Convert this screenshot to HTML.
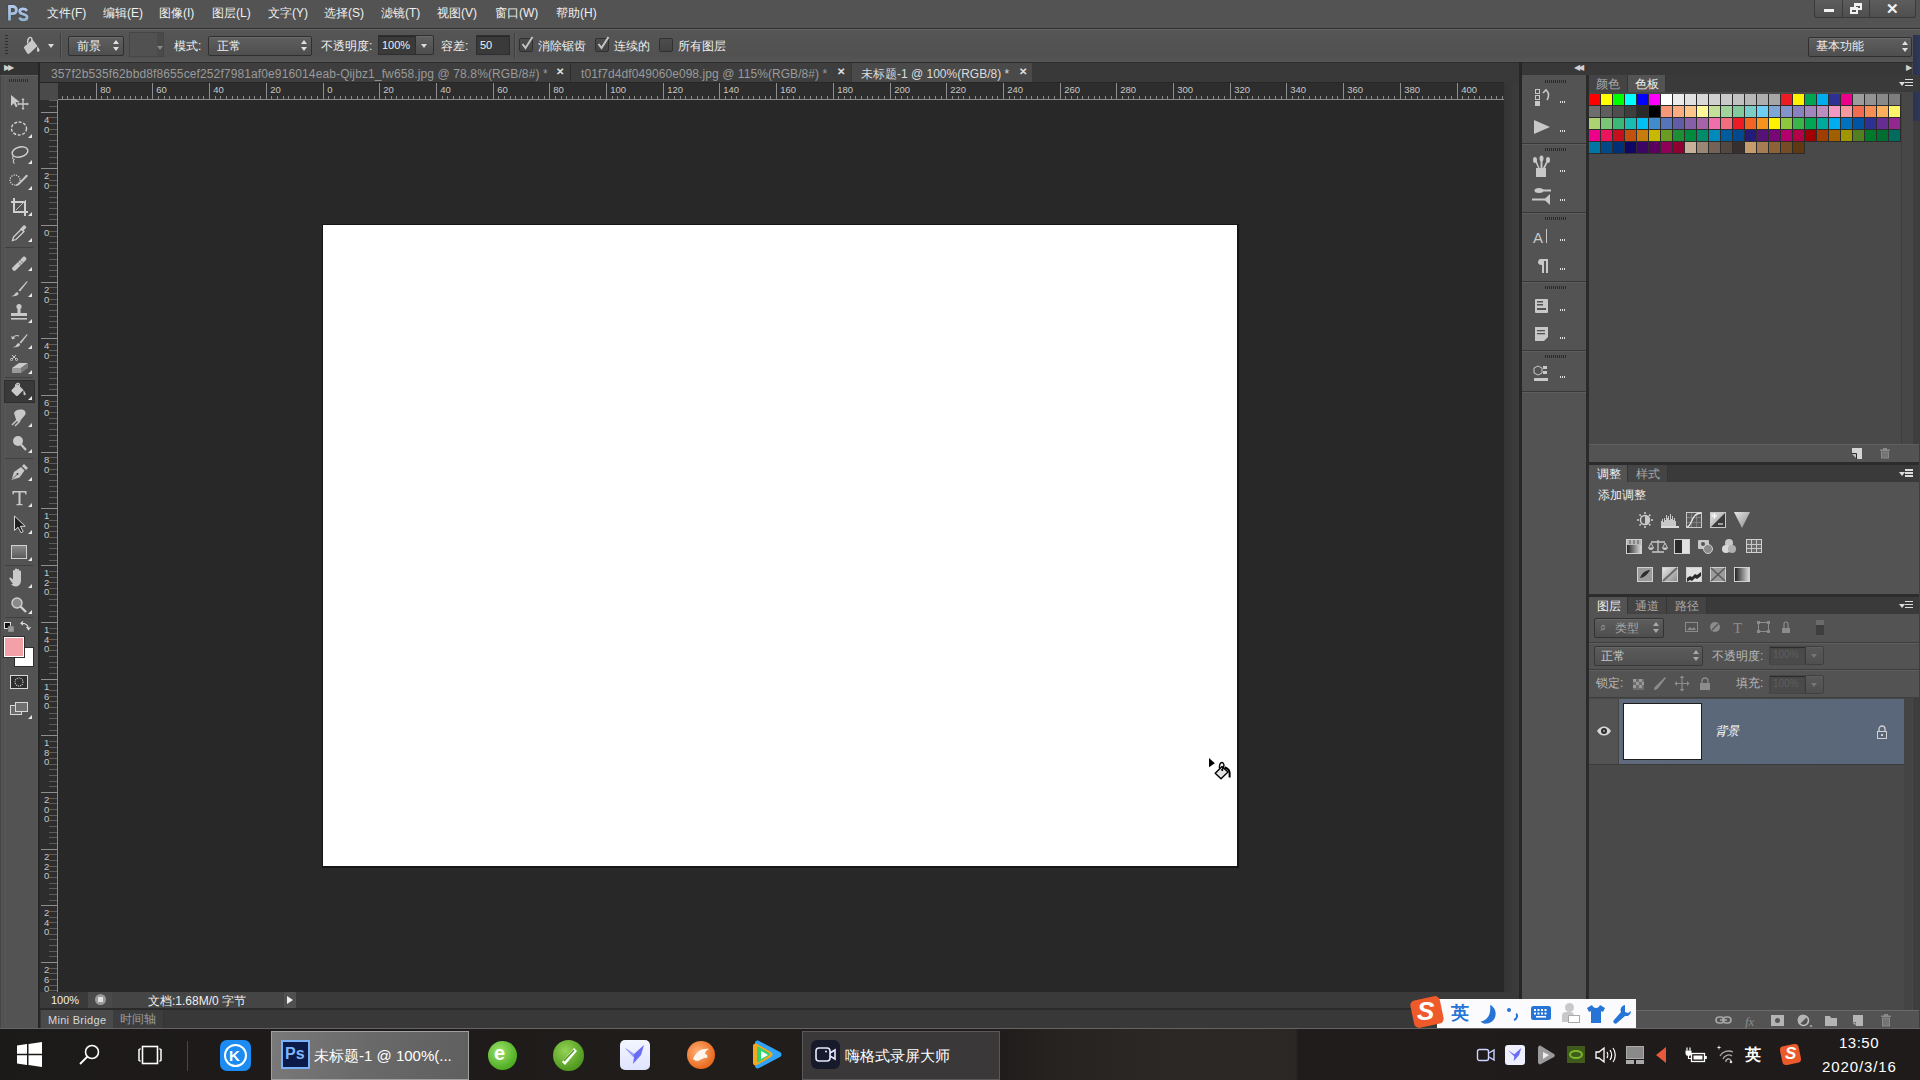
<!DOCTYPE html>
<html><head><meta charset="utf-8">
<style>
*{margin:0;padding:0;box-sizing:border-box}
html,body{width:1920px;height:1080px;overflow:hidden;background:#282828;font-family:"Liberation Sans",sans-serif;font-size:12px;color:#e6e6e6}
.a{position:absolute}
.t{position:absolute;white-space:nowrap;line-height:1}
.sel{position:absolute;background:linear-gradient(#5f5f5f,#4e4e4e);border:1px solid #2f2f2f;border-radius:2px;box-shadow:inset 0 1px 0 #6a6a6a}
.inp{position:absolute;background:#3a3a3a;border:1px solid #2e2e2e;box-shadow:inset 0 1px 1px #2a2a2a}
.ud{position:absolute;width:7px;height:11px}
.ud:before{content:"";position:absolute;left:0;top:0;border-left:3.5px solid transparent;border-right:3.5px solid transparent;border-bottom:4px solid #e0e0e0}
.ud:after{content:"";position:absolute;left:0;bottom:0;border-left:3.5px solid transparent;border-right:3.5px solid transparent;border-top:4px solid #e0e0e0}
.dn{position:absolute;border-left:3.5px solid transparent;border-right:3.5px solid transparent;border-top:4px solid #dcdcdc}
.cb{position:absolute;width:14px;height:14px;background:linear-gradient(#4d4d4d,#444);border:1px solid #2f2f2f;border-radius:2px}
.sw{position:absolute;width:11px;height:11px}
.ic{position:absolute}
</style></head><body>
<!-- MENU BAR -->
<div class="a" style="left:0;top:0;width:1920px;height:29px;background:#535353;border-bottom:1px solid #303030"></div>
<svg class="ic" style="left:0;top:0" width="36" height="28" viewBox="0 0 36 28"><defs><linearGradient id="psg" x1="0" y1="0" x2="0" y2="1"><stop offset="0" stop-color="#b4c8ec"/><stop offset="1" stop-color="#94b4cc"/></linearGradient></defs><g fill="none" stroke="#3c4852" stroke-width="4.5" opacity=".55"><path d="M9.5 20.5V6.5h3.3a3.6 3.6 0 0 1 0 7.2H9.5"/><path d="M27 10.8c-1-1.3-2.4-1.9-3.9-1.9-2 0-3.4 1-3.4 2.6 0 3.4 7.4 2.1 7.4 5.4 0 1.8-1.7 2.9-3.7 2.9-1.7 0-3.3-.7-4.1-2"/></g><g fill="none" stroke="url(#psg)" stroke-width="2.8"><path d="M9.5 20.5V6.5h3.3a3.6 3.6 0 0 1 0 7.2H9.5"/><path d="M27 10.8c-1-1.3-2.4-1.9-3.9-1.9-2 0-3.4 1-3.4 2.6 0 3.4 7.4 2.1 7.4 5.4 0 1.8-1.7 2.9-3.7 2.9-1.7 0-3.3-.7-4.1-2"/></g></svg>
<div class="t" style="left:47px;top:7px;color:#f0f0f0">文件(F)</div>
<div class="t" style="left:103px;top:7px;color:#f0f0f0">编辑(E)</div>
<div class="t" style="left:159px;top:7px;color:#f0f0f0">图像(I)</div>
<div class="t" style="left:212px;top:7px;color:#f0f0f0">图层(L)</div>
<div class="t" style="left:268px;top:7px;color:#f0f0f0">文字(Y)</div>
<div class="t" style="left:324px;top:7px;color:#f0f0f0">选择(S)</div>
<div class="t" style="left:381px;top:7px;color:#f0f0f0">滤镜(T)</div>
<div class="t" style="left:437px;top:7px;color:#f0f0f0">视图(V)</div>
<div class="t" style="left:495px;top:7px;color:#f0f0f0">窗口(W)</div>
<div class="t" style="left:556px;top:7px;color:#f0f0f0">帮助(H)</div>
<!-- window buttons -->
<div class="a" style="left:1814px;top:0;width:102px;height:18px;background:linear-gradient(#5d5d5d,#4f4f4f);border:1px solid #3a3a3a;border-top:none;border-radius:0 0 3px 3px"></div>
<div class="a" style="left:1842px;top:0;width:1px;height:17px;background:#3a3a3a"></div>
<div class="a" style="left:1869px;top:0;width:1px;height:17px;background:#3a3a3a"></div>
<div class="a" style="left:1824px;top:9px;width:10px;height:3px;background:#f2f2f2"></div>
<div class="a" style="left:1854px;top:3px;width:8px;height:7px;border:2px solid #f2f2f2;border-top-width:3px"></div>
<div class="a" style="left:1850px;top:7px;width:8px;height:7px;border:2px solid #f2f2f2;border-top-width:3px;background:#565656"></div>
<div class="t" style="left:1886px;top:1px;font-size:15px;font-weight:bold;color:#f2f2f2">✕</div>
<!-- OPTIONS BAR -->
<div class="a" style="left:0;top:29px;width:1920px;height:34px;background:linear-gradient(#555,#515151 80%,#565656);border-top:1px solid #666;border-bottom:1px solid #2c2c2c"></div>
<div class="a" style="left:5px;top:35px;width:3px;height:20px;background:repeating-linear-gradient(#2e2e2e 0 1px,transparent 1px 3px)"></div>
<svg class="ic" style="left:22px;top:34px" width="20" height="20" viewBox="0 0 20 20"><path d="M2.5 12.5L10.5 5.5l5 6.5-8 7.5c-.8.7-1.8.6-2.4-.2L2.3 14.5c-.5-.7-.5-1.4.2-2z" fill="#c8c8c8"/><path d="M5.8 9.5C5 4 8.5 1.8 9.8 4.5l.2 4" fill="none" stroke="#cfcfcf" stroke-width="1.4"/><path d="M15.5 12.5c1.2 1.4 2 2.8 2 4a1.3 1.3 0 0 1-2.6 0c0-1.2.4-2.5.6-4z" fill="#d0d0d0"/></svg>
<div class="dn" style="left:48px;top:44px"></div>
<div class="a" style="left:60px;top:33px;width:1px;height:25px;background:#3e3e3e;box-shadow:1px 0 0 #5e5e5e"></div>
<div class="sel" style="left:68px;top:36px;width:56px;height:20px"></div>
<div class="t" style="left:77px;top:40px;color:#f0f0f0">前景</div>
<div class="ud" style="left:113px;top:40px"></div>
<div class="a" style="left:129px;top:32px;width:35px;height:25px;border:1px solid #454545;background:#515151"></div>
<div class="a" style="left:157px;top:33px;width:6px;height:23px;background:#4a4a4a"></div>
<div class="dn" style="left:157px;top:46px;border-top-color:#8a8a8a"></div>
<div class="t" style="left:174px;top:40px;color:#f0f0f0">模式:</div>
<div class="sel" style="left:208px;top:36px;width:104px;height:20px"></div>
<div class="t" style="left:217px;top:40px;color:#f0f0f0">正常</div>
<div class="ud" style="left:301px;top:40px"></div>
<div class="t" style="left:321px;top:40px;color:#f0f0f0">不透明度:</div>
<div class="inp" style="left:378px;top:35px;width:38px;height:20px"></div>
<div class="t" style="left:382px;top:40px;color:#f0f0f0;font-size:11px">100%</div>
<div class="sel" style="left:415px;top:35px;width:19px;height:20px"></div>
<div class="dn" style="left:421px;top:44px"></div>
<div class="t" style="left:441px;top:40px;color:#f0f0f0">容差:</div>
<div class="inp" style="left:476px;top:35px;width:34px;height:20px"></div>
<div class="t" style="left:480px;top:40px;color:#f0f0f0;font-size:11px">50</div>
<div class="a" style="left:514px;top:33px;width:1px;height:25px;background:#3e3e3e;box-shadow:1px 0 0 #5e5e5e"></div>
<div class="cb" style="left:519px;top:38px"></div>
<svg class="ic" style="left:520px;top:35px" width="14" height="16" viewBox="0 0 14 16"><path d="M2.5 9l3 4L12.5 2" fill="none" stroke="#c4c4c4" stroke-width="2"/></svg>
<div class="t" style="left:538px;top:40px;color:#f0f0f0">消除锯齿</div>
<div class="cb" style="left:595px;top:38px"></div>
<svg class="ic" style="left:596px;top:35px" width="14" height="16" viewBox="0 0 14 16"><path d="M2.5 9l3 4L12.5 2" fill="none" stroke="#c4c4c4" stroke-width="2"/></svg>
<div class="t" style="left:614px;top:40px;color:#f0f0f0">连续的</div>
<div class="cb" style="left:659px;top:38px"></div>
<div class="t" style="left:678px;top:40px;color:#f0f0f0">所有图层</div>
<div class="sel" style="left:1808px;top:37px;width:104px;height:20px"></div>
<div class="t" style="left:1816px;top:40px;color:#f0f0f0">基本功能</div>
<div class="ud" style="left:1902px;top:41px"></div>
<div class="a" style="left:0;top:63px;width:1522px;height:20px;background:#393939"></div>
<div class="a" style="left:0;top:63px;width:38px;height:12px;background:#333"></div>
<div class="t" style="left:4px;top:64px;font-size:8px;color:#d0d0d0;letter-spacing:-2px">▶▶</div>
<div class="a" style="left:38px;top:62px;width:2px;height:966px;background:#262626"></div>
<div class="a" style="left:40px;top:63px;width:530px;height:19px;background:#3e3e3e"></div>
<div class="a" style="left:570px;top:64px;width:1px;height:17px;background:#2c2c2c"></div>
<div class="a" style="left:571px;top:63px;width:280px;height:19px;background:#3e3e3e"></div>
<div class="a" style="left:852px;top:63px;width:180px;height:19px;background:#4a4a4a"></div>
<div class="t" style="left:51px;top:68px;color:#9a9a9a;font-size:12px;letter-spacing:.12px">357f2b535f62bbd8f8655cef252f7981af0e916014eab-Qijbz1_fw658.jpg @ 78.8%(RGB/8#) *</div>
<div class="t" style="left:556px;top:67px;color:#e0e0e0;font-size:10px;font-weight:bold">✕</div>
<div class="t" style="left:581px;top:68px;color:#9a9a9a;font-size:12px;letter-spacing:.07px">t01f7d4df049060e098.jpg @ 115%(RGB/8#) *</div>
<div class="t" style="left:837px;top:67px;color:#e0e0e0;font-size:10px;font-weight:bold">✕</div>
<div class="t" style="left:861px;top:68px;color:#dcdcdc;font-size:12px">未标题-1 @ 100%(RGB/8) *</div>
<div class="t" style="left:1019px;top:67px;color:#e0e0e0;font-size:10px;font-weight:bold">✕</div>
<div class="a" style="left:40px;top:82px;width:1464px;height:1px;background:#262626"></div>
<div class="a" style="left:57px;top:83px;width:1447px;height:17px;background:#2d2d2d"></div>
<div class="a" style="left:40px;top:83px;width:17px;height:909px;background:#2d2d2d"></div>
<div class="a" style="left:40px;top:83px;width:18px;height:17px;background:#4a4a4a"></div>
<div class="a" style="left:58px;top:99px;width:1446px;height:1px;background:#8a8a8a"></div>
<div class="a" style="left:57px;top:100px;width:1px;height:892px;background:#8a8a8a"></div>
<svg class="ic" style="left:58px;top:83px" width="1446" height="17"><line x1="4.5" y1="13" x2="4.5" y2="17" stroke="#8a8a8a" stroke-width="1"/><line x1="9.5" y1="13" x2="9.5" y2="17" stroke="#8a8a8a" stroke-width="1"/><line x1="15.5" y1="13" x2="15.5" y2="17" stroke="#8a8a8a" stroke-width="1"/><line x1="21.5" y1="13" x2="21.5" y2="17" stroke="#8a8a8a" stroke-width="1"/><line x1="26.5" y1="13" x2="26.5" y2="17" stroke="#8a8a8a" stroke-width="1"/><line x1="32.5" y1="13" x2="32.5" y2="17" stroke="#8a8a8a" stroke-width="1"/><line x1="38.5" y1="0" x2="38.5" y2="17" stroke="#8e8e8e" stroke-width="1"/><text x="42.2" y="10.2" font-size="9.5" fill="#c8c8c8" font-family="Liberation Sans">80</text><line x1="43.5" y1="13" x2="43.5" y2="17" stroke="#8a8a8a" stroke-width="1"/><line x1="49.5" y1="13" x2="49.5" y2="17" stroke="#8a8a8a" stroke-width="1"/><line x1="55.5" y1="13" x2="55.5" y2="17" stroke="#8a8a8a" stroke-width="1"/><line x1="60.5" y1="13" x2="60.5" y2="17" stroke="#8a8a8a" stroke-width="1"/><line x1="66.5" y1="13" x2="66.5" y2="17" stroke="#8a8a8a" stroke-width="1"/><line x1="72.5" y1="13" x2="72.5" y2="17" stroke="#8a8a8a" stroke-width="1"/><line x1="77.5" y1="13" x2="77.5" y2="17" stroke="#8a8a8a" stroke-width="1"/><line x1="83.5" y1="13" x2="83.5" y2="17" stroke="#8a8a8a" stroke-width="1"/><line x1="89.5" y1="13" x2="89.5" y2="17" stroke="#8a8a8a" stroke-width="1"/><line x1="94.5" y1="0" x2="94.5" y2="17" stroke="#8e8e8e" stroke-width="1"/><text x="98.2" y="10.2" font-size="9.5" fill="#c8c8c8" font-family="Liberation Sans">60</text><line x1="100.5" y1="13" x2="100.5" y2="17" stroke="#8a8a8a" stroke-width="1"/><line x1="106.5" y1="13" x2="106.5" y2="17" stroke="#8a8a8a" stroke-width="1"/><line x1="111.5" y1="13" x2="111.5" y2="17" stroke="#8a8a8a" stroke-width="1"/><line x1="117.5" y1="13" x2="117.5" y2="17" stroke="#8a8a8a" stroke-width="1"/><line x1="123.5" y1="13" x2="123.5" y2="17" stroke="#8a8a8a" stroke-width="1"/><line x1="128.5" y1="13" x2="128.5" y2="17" stroke="#8a8a8a" stroke-width="1"/><line x1="134.5" y1="13" x2="134.5" y2="17" stroke="#8a8a8a" stroke-width="1"/><line x1="140.5" y1="13" x2="140.5" y2="17" stroke="#8a8a8a" stroke-width="1"/><line x1="145.5" y1="13" x2="145.5" y2="17" stroke="#8a8a8a" stroke-width="1"/><line x1="151.5" y1="0" x2="151.5" y2="17" stroke="#8e8e8e" stroke-width="1"/><text x="155.2" y="10.2" font-size="9.5" fill="#c8c8c8" font-family="Liberation Sans">40</text><line x1="157.5" y1="13" x2="157.5" y2="17" stroke="#8a8a8a" stroke-width="1"/><line x1="162.5" y1="13" x2="162.5" y2="17" stroke="#8a8a8a" stroke-width="1"/><line x1="168.5" y1="13" x2="168.5" y2="17" stroke="#8a8a8a" stroke-width="1"/><line x1="174.5" y1="13" x2="174.5" y2="17" stroke="#8a8a8a" stroke-width="1"/><line x1="179.5" y1="13" x2="179.5" y2="17" stroke="#8a8a8a" stroke-width="1"/><line x1="185.5" y1="13" x2="185.5" y2="17" stroke="#8a8a8a" stroke-width="1"/><line x1="191.5" y1="13" x2="191.5" y2="17" stroke="#8a8a8a" stroke-width="1"/><line x1="196.5" y1="13" x2="196.5" y2="17" stroke="#8a8a8a" stroke-width="1"/><line x1="202.5" y1="13" x2="202.5" y2="17" stroke="#8a8a8a" stroke-width="1"/><line x1="208.5" y1="0" x2="208.5" y2="17" stroke="#8e8e8e" stroke-width="1"/><text x="212.2" y="10.2" font-size="9.5" fill="#c8c8c8" font-family="Liberation Sans">20</text><line x1="213.5" y1="13" x2="213.5" y2="17" stroke="#8a8a8a" stroke-width="1"/><line x1="219.5" y1="13" x2="219.5" y2="17" stroke="#8a8a8a" stroke-width="1"/><line x1="225.5" y1="13" x2="225.5" y2="17" stroke="#8a8a8a" stroke-width="1"/><line x1="230.5" y1="13" x2="230.5" y2="17" stroke="#8a8a8a" stroke-width="1"/><line x1="236.5" y1="13" x2="236.5" y2="17" stroke="#8a8a8a" stroke-width="1"/><line x1="242.5" y1="13" x2="242.5" y2="17" stroke="#8a8a8a" stroke-width="1"/><line x1="247.5" y1="13" x2="247.5" y2="17" stroke="#8a8a8a" stroke-width="1"/><line x1="253.5" y1="13" x2="253.5" y2="17" stroke="#8a8a8a" stroke-width="1"/><line x1="259.5" y1="13" x2="259.5" y2="17" stroke="#8a8a8a" stroke-width="1"/><line x1="265.5" y1="0" x2="265.5" y2="17" stroke="#8e8e8e" stroke-width="1"/><text x="269.2" y="10.2" font-size="9.5" fill="#c8c8c8" font-family="Liberation Sans">0</text><line x1="270.5" y1="13" x2="270.5" y2="17" stroke="#8a8a8a" stroke-width="1"/><line x1="276.5" y1="13" x2="276.5" y2="17" stroke="#8a8a8a" stroke-width="1"/><line x1="282.5" y1="13" x2="282.5" y2="17" stroke="#8a8a8a" stroke-width="1"/><line x1="287.5" y1="13" x2="287.5" y2="17" stroke="#8a8a8a" stroke-width="1"/><line x1="293.5" y1="13" x2="293.5" y2="17" stroke="#8a8a8a" stroke-width="1"/><line x1="299.5" y1="13" x2="299.5" y2="17" stroke="#8a8a8a" stroke-width="1"/><line x1="304.5" y1="13" x2="304.5" y2="17" stroke="#8a8a8a" stroke-width="1"/><line x1="310.5" y1="13" x2="310.5" y2="17" stroke="#8a8a8a" stroke-width="1"/><line x1="316.5" y1="13" x2="316.5" y2="17" stroke="#8a8a8a" stroke-width="1"/><line x1="321.5" y1="0" x2="321.5" y2="17" stroke="#8e8e8e" stroke-width="1"/><text x="325.2" y="10.2" font-size="9.5" fill="#c8c8c8" font-family="Liberation Sans">20</text><line x1="327.5" y1="13" x2="327.5" y2="17" stroke="#8a8a8a" stroke-width="1"/><line x1="333.5" y1="13" x2="333.5" y2="17" stroke="#8a8a8a" stroke-width="1"/><line x1="338.5" y1="13" x2="338.5" y2="17" stroke="#8a8a8a" stroke-width="1"/><line x1="344.5" y1="13" x2="344.5" y2="17" stroke="#8a8a8a" stroke-width="1"/><line x1="350.5" y1="13" x2="350.5" y2="17" stroke="#8a8a8a" stroke-width="1"/><line x1="355.5" y1="13" x2="355.5" y2="17" stroke="#8a8a8a" stroke-width="1"/><line x1="361.5" y1="13" x2="361.5" y2="17" stroke="#8a8a8a" stroke-width="1"/><line x1="367.5" y1="13" x2="367.5" y2="17" stroke="#8a8a8a" stroke-width="1"/><line x1="372.5" y1="13" x2="372.5" y2="17" stroke="#8a8a8a" stroke-width="1"/><line x1="378.5" y1="0" x2="378.5" y2="17" stroke="#8e8e8e" stroke-width="1"/><text x="382.2" y="10.2" font-size="9.5" fill="#c8c8c8" font-family="Liberation Sans">40</text><line x1="384.5" y1="13" x2="384.5" y2="17" stroke="#8a8a8a" stroke-width="1"/><line x1="389.5" y1="13" x2="389.5" y2="17" stroke="#8a8a8a" stroke-width="1"/><line x1="395.5" y1="13" x2="395.5" y2="17" stroke="#8a8a8a" stroke-width="1"/><line x1="401.5" y1="13" x2="401.5" y2="17" stroke="#8a8a8a" stroke-width="1"/><line x1="406.5" y1="13" x2="406.5" y2="17" stroke="#8a8a8a" stroke-width="1"/><line x1="412.5" y1="13" x2="412.5" y2="17" stroke="#8a8a8a" stroke-width="1"/><line x1="418.5" y1="13" x2="418.5" y2="17" stroke="#8a8a8a" stroke-width="1"/><line x1="423.5" y1="13" x2="423.5" y2="17" stroke="#8a8a8a" stroke-width="1"/><line x1="429.5" y1="13" x2="429.5" y2="17" stroke="#8a8a8a" stroke-width="1"/><line x1="435.5" y1="0" x2="435.5" y2="17" stroke="#8e8e8e" stroke-width="1"/><text x="439.2" y="10.2" font-size="9.5" fill="#c8c8c8" font-family="Liberation Sans">60</text><line x1="440.5" y1="13" x2="440.5" y2="17" stroke="#8a8a8a" stroke-width="1"/><line x1="446.5" y1="13" x2="446.5" y2="17" stroke="#8a8a8a" stroke-width="1"/><line x1="452.5" y1="13" x2="452.5" y2="17" stroke="#8a8a8a" stroke-width="1"/><line x1="457.5" y1="13" x2="457.5" y2="17" stroke="#8a8a8a" stroke-width="1"/><line x1="463.5" y1="13" x2="463.5" y2="17" stroke="#8a8a8a" stroke-width="1"/><line x1="469.5" y1="13" x2="469.5" y2="17" stroke="#8a8a8a" stroke-width="1"/><line x1="474.5" y1="13" x2="474.5" y2="17" stroke="#8a8a8a" stroke-width="1"/><line x1="480.5" y1="13" x2="480.5" y2="17" stroke="#8a8a8a" stroke-width="1"/><line x1="486.5" y1="13" x2="486.5" y2="17" stroke="#8a8a8a" stroke-width="1"/><line x1="491.5" y1="0" x2="491.5" y2="17" stroke="#8e8e8e" stroke-width="1"/><text x="495.2" y="10.2" font-size="9.5" fill="#c8c8c8" font-family="Liberation Sans">80</text><line x1="497.5" y1="13" x2="497.5" y2="17" stroke="#8a8a8a" stroke-width="1"/><line x1="503.5" y1="13" x2="503.5" y2="17" stroke="#8a8a8a" stroke-width="1"/><line x1="508.5" y1="13" x2="508.5" y2="17" stroke="#8a8a8a" stroke-width="1"/><line x1="514.5" y1="13" x2="514.5" y2="17" stroke="#8a8a8a" stroke-width="1"/><line x1="520.5" y1="13" x2="520.5" y2="17" stroke="#8a8a8a" stroke-width="1"/><line x1="525.5" y1="13" x2="525.5" y2="17" stroke="#8a8a8a" stroke-width="1"/><line x1="531.5" y1="13" x2="531.5" y2="17" stroke="#8a8a8a" stroke-width="1"/><line x1="537.5" y1="13" x2="537.5" y2="17" stroke="#8a8a8a" stroke-width="1"/><line x1="542.5" y1="13" x2="542.5" y2="17" stroke="#8a8a8a" stroke-width="1"/><line x1="548.5" y1="0" x2="548.5" y2="17" stroke="#8e8e8e" stroke-width="1"/><text x="552.2" y="10.2" font-size="9.5" fill="#c8c8c8" font-family="Liberation Sans">100</text><line x1="554.5" y1="13" x2="554.5" y2="17" stroke="#8a8a8a" stroke-width="1"/><line x1="559.5" y1="13" x2="559.5" y2="17" stroke="#8a8a8a" stroke-width="1"/><line x1="565.5" y1="13" x2="565.5" y2="17" stroke="#8a8a8a" stroke-width="1"/><line x1="571.5" y1="13" x2="571.5" y2="17" stroke="#8a8a8a" stroke-width="1"/><line x1="576.5" y1="13" x2="576.5" y2="17" stroke="#8a8a8a" stroke-width="1"/><line x1="582.5" y1="13" x2="582.5" y2="17" stroke="#8a8a8a" stroke-width="1"/><line x1="588.5" y1="13" x2="588.5" y2="17" stroke="#8a8a8a" stroke-width="1"/><line x1="593.5" y1="13" x2="593.5" y2="17" stroke="#8a8a8a" stroke-width="1"/><line x1="599.5" y1="13" x2="599.5" y2="17" stroke="#8a8a8a" stroke-width="1"/><line x1="605.5" y1="0" x2="605.5" y2="17" stroke="#8e8e8e" stroke-width="1"/><text x="609.2" y="10.2" font-size="9.5" fill="#c8c8c8" font-family="Liberation Sans">120</text><line x1="610.5" y1="13" x2="610.5" y2="17" stroke="#8a8a8a" stroke-width="1"/><line x1="616.5" y1="13" x2="616.5" y2="17" stroke="#8a8a8a" stroke-width="1"/><line x1="622.5" y1="13" x2="622.5" y2="17" stroke="#8a8a8a" stroke-width="1"/><line x1="627.5" y1="13" x2="627.5" y2="17" stroke="#8a8a8a" stroke-width="1"/><line x1="633.5" y1="13" x2="633.5" y2="17" stroke="#8a8a8a" stroke-width="1"/><line x1="639.5" y1="13" x2="639.5" y2="17" stroke="#8a8a8a" stroke-width="1"/><line x1="644.5" y1="13" x2="644.5" y2="17" stroke="#8a8a8a" stroke-width="1"/><line x1="650.5" y1="13" x2="650.5" y2="17" stroke="#8a8a8a" stroke-width="1"/><line x1="656.5" y1="13" x2="656.5" y2="17" stroke="#8a8a8a" stroke-width="1"/><line x1="661.5" y1="0" x2="661.5" y2="17" stroke="#8e8e8e" stroke-width="1"/><text x="665.2" y="10.2" font-size="9.5" fill="#c8c8c8" font-family="Liberation Sans">140</text><line x1="667.5" y1="13" x2="667.5" y2="17" stroke="#8a8a8a" stroke-width="1"/><line x1="673.5" y1="13" x2="673.5" y2="17" stroke="#8a8a8a" stroke-width="1"/><line x1="678.5" y1="13" x2="678.5" y2="17" stroke="#8a8a8a" stroke-width="1"/><line x1="684.5" y1="13" x2="684.5" y2="17" stroke="#8a8a8a" stroke-width="1"/><line x1="690.5" y1="13" x2="690.5" y2="17" stroke="#8a8a8a" stroke-width="1"/><line x1="695.5" y1="13" x2="695.5" y2="17" stroke="#8a8a8a" stroke-width="1"/><line x1="701.5" y1="13" x2="701.5" y2="17" stroke="#8a8a8a" stroke-width="1"/><line x1="707.5" y1="13" x2="707.5" y2="17" stroke="#8a8a8a" stroke-width="1"/><line x1="712.5" y1="13" x2="712.5" y2="17" stroke="#8a8a8a" stroke-width="1"/><line x1="718.5" y1="0" x2="718.5" y2="17" stroke="#8e8e8e" stroke-width="1"/><text x="722.2" y="10.2" font-size="9.5" fill="#c8c8c8" font-family="Liberation Sans">160</text><line x1="724.5" y1="13" x2="724.5" y2="17" stroke="#8a8a8a" stroke-width="1"/><line x1="729.5" y1="13" x2="729.5" y2="17" stroke="#8a8a8a" stroke-width="1"/><line x1="735.5" y1="13" x2="735.5" y2="17" stroke="#8a8a8a" stroke-width="1"/><line x1="741.5" y1="13" x2="741.5" y2="17" stroke="#8a8a8a" stroke-width="1"/><line x1="746.5" y1="13" x2="746.5" y2="17" stroke="#8a8a8a" stroke-width="1"/><line x1="752.5" y1="13" x2="752.5" y2="17" stroke="#8a8a8a" stroke-width="1"/><line x1="758.5" y1="13" x2="758.5" y2="17" stroke="#8a8a8a" stroke-width="1"/><line x1="763.5" y1="13" x2="763.5" y2="17" stroke="#8a8a8a" stroke-width="1"/><line x1="769.5" y1="13" x2="769.5" y2="17" stroke="#8a8a8a" stroke-width="1"/><line x1="775.5" y1="0" x2="775.5" y2="17" stroke="#8e8e8e" stroke-width="1"/><text x="779.2" y="10.2" font-size="9.5" fill="#c8c8c8" font-family="Liberation Sans">180</text><line x1="780.5" y1="13" x2="780.5" y2="17" stroke="#8a8a8a" stroke-width="1"/><line x1="786.5" y1="13" x2="786.5" y2="17" stroke="#8a8a8a" stroke-width="1"/><line x1="792.5" y1="13" x2="792.5" y2="17" stroke="#8a8a8a" stroke-width="1"/><line x1="797.5" y1="13" x2="797.5" y2="17" stroke="#8a8a8a" stroke-width="1"/><line x1="803.5" y1="13" x2="803.5" y2="17" stroke="#8a8a8a" stroke-width="1"/><line x1="809.5" y1="13" x2="809.5" y2="17" stroke="#8a8a8a" stroke-width="1"/><line x1="814.5" y1="13" x2="814.5" y2="17" stroke="#8a8a8a" stroke-width="1"/><line x1="820.5" y1="13" x2="820.5" y2="17" stroke="#8a8a8a" stroke-width="1"/><line x1="826.5" y1="13" x2="826.5" y2="17" stroke="#8a8a8a" stroke-width="1"/><line x1="832.5" y1="0" x2="832.5" y2="17" stroke="#8e8e8e" stroke-width="1"/><text x="836.2" y="10.2" font-size="9.5" fill="#c8c8c8" font-family="Liberation Sans">200</text><line x1="837.5" y1="13" x2="837.5" y2="17" stroke="#8a8a8a" stroke-width="1"/><line x1="843.5" y1="13" x2="843.5" y2="17" stroke="#8a8a8a" stroke-width="1"/><line x1="849.5" y1="13" x2="849.5" y2="17" stroke="#8a8a8a" stroke-width="1"/><line x1="854.5" y1="13" x2="854.5" y2="17" stroke="#8a8a8a" stroke-width="1"/><line x1="860.5" y1="13" x2="860.5" y2="17" stroke="#8a8a8a" stroke-width="1"/><line x1="866.5" y1="13" x2="866.5" y2="17" stroke="#8a8a8a" stroke-width="1"/><line x1="871.5" y1="13" x2="871.5" y2="17" stroke="#8a8a8a" stroke-width="1"/><line x1="877.5" y1="13" x2="877.5" y2="17" stroke="#8a8a8a" stroke-width="1"/><line x1="883.5" y1="13" x2="883.5" y2="17" stroke="#8a8a8a" stroke-width="1"/><line x1="888.5" y1="0" x2="888.5" y2="17" stroke="#8e8e8e" stroke-width="1"/><text x="892.2" y="10.2" font-size="9.5" fill="#c8c8c8" font-family="Liberation Sans">220</text><line x1="894.5" y1="13" x2="894.5" y2="17" stroke="#8a8a8a" stroke-width="1"/><line x1="900.5" y1="13" x2="900.5" y2="17" stroke="#8a8a8a" stroke-width="1"/><line x1="905.5" y1="13" x2="905.5" y2="17" stroke="#8a8a8a" stroke-width="1"/><line x1="911.5" y1="13" x2="911.5" y2="17" stroke="#8a8a8a" stroke-width="1"/><line x1="917.5" y1="13" x2="917.5" y2="17" stroke="#8a8a8a" stroke-width="1"/><line x1="922.5" y1="13" x2="922.5" y2="17" stroke="#8a8a8a" stroke-width="1"/><line x1="928.5" y1="13" x2="928.5" y2="17" stroke="#8a8a8a" stroke-width="1"/><line x1="934.5" y1="13" x2="934.5" y2="17" stroke="#8a8a8a" stroke-width="1"/><line x1="939.5" y1="13" x2="939.5" y2="17" stroke="#8a8a8a" stroke-width="1"/><line x1="945.5" y1="0" x2="945.5" y2="17" stroke="#8e8e8e" stroke-width="1"/><text x="949.2" y="10.2" font-size="9.5" fill="#c8c8c8" font-family="Liberation Sans">240</text><line x1="951.5" y1="13" x2="951.5" y2="17" stroke="#8a8a8a" stroke-width="1"/><line x1="956.5" y1="13" x2="956.5" y2="17" stroke="#8a8a8a" stroke-width="1"/><line x1="962.5" y1="13" x2="962.5" y2="17" stroke="#8a8a8a" stroke-width="1"/><line x1="968.5" y1="13" x2="968.5" y2="17" stroke="#8a8a8a" stroke-width="1"/><line x1="973.5" y1="13" x2="973.5" y2="17" stroke="#8a8a8a" stroke-width="1"/><line x1="979.5" y1="13" x2="979.5" y2="17" stroke="#8a8a8a" stroke-width="1"/><line x1="985.5" y1="13" x2="985.5" y2="17" stroke="#8a8a8a" stroke-width="1"/><line x1="990.5" y1="13" x2="990.5" y2="17" stroke="#8a8a8a" stroke-width="1"/><line x1="996.5" y1="13" x2="996.5" y2="17" stroke="#8a8a8a" stroke-width="1"/><line x1="1002.5" y1="0" x2="1002.5" y2="17" stroke="#8e8e8e" stroke-width="1"/><text x="1006.2" y="10.2" font-size="9.5" fill="#c8c8c8" font-family="Liberation Sans">260</text><line x1="1007.5" y1="13" x2="1007.5" y2="17" stroke="#8a8a8a" stroke-width="1"/><line x1="1013.5" y1="13" x2="1013.5" y2="17" stroke="#8a8a8a" stroke-width="1"/><line x1="1019.5" y1="13" x2="1019.5" y2="17" stroke="#8a8a8a" stroke-width="1"/><line x1="1024.5" y1="13" x2="1024.5" y2="17" stroke="#8a8a8a" stroke-width="1"/><line x1="1030.5" y1="13" x2="1030.5" y2="17" stroke="#8a8a8a" stroke-width="1"/><line x1="1036.5" y1="13" x2="1036.5" y2="17" stroke="#8a8a8a" stroke-width="1"/><line x1="1041.5" y1="13" x2="1041.5" y2="17" stroke="#8a8a8a" stroke-width="1"/><line x1="1047.5" y1="13" x2="1047.5" y2="17" stroke="#8a8a8a" stroke-width="1"/><line x1="1053.5" y1="13" x2="1053.5" y2="17" stroke="#8a8a8a" stroke-width="1"/><line x1="1058.5" y1="0" x2="1058.5" y2="17" stroke="#8e8e8e" stroke-width="1"/><text x="1062.2" y="10.2" font-size="9.5" fill="#c8c8c8" font-family="Liberation Sans">280</text><line x1="1064.5" y1="13" x2="1064.5" y2="17" stroke="#8a8a8a" stroke-width="1"/><line x1="1070.5" y1="13" x2="1070.5" y2="17" stroke="#8a8a8a" stroke-width="1"/><line x1="1075.5" y1="13" x2="1075.5" y2="17" stroke="#8a8a8a" stroke-width="1"/><line x1="1081.5" y1="13" x2="1081.5" y2="17" stroke="#8a8a8a" stroke-width="1"/><line x1="1087.5" y1="13" x2="1087.5" y2="17" stroke="#8a8a8a" stroke-width="1"/><line x1="1092.5" y1="13" x2="1092.5" y2="17" stroke="#8a8a8a" stroke-width="1"/><line x1="1098.5" y1="13" x2="1098.5" y2="17" stroke="#8a8a8a" stroke-width="1"/><line x1="1104.5" y1="13" x2="1104.5" y2="17" stroke="#8a8a8a" stroke-width="1"/><line x1="1109.5" y1="13" x2="1109.5" y2="17" stroke="#8a8a8a" stroke-width="1"/><line x1="1115.5" y1="0" x2="1115.5" y2="17" stroke="#8e8e8e" stroke-width="1"/><text x="1119.2" y="10.2" font-size="9.5" fill="#c8c8c8" font-family="Liberation Sans">300</text><line x1="1121.5" y1="13" x2="1121.5" y2="17" stroke="#8a8a8a" stroke-width="1"/><line x1="1126.5" y1="13" x2="1126.5" y2="17" stroke="#8a8a8a" stroke-width="1"/><line x1="1132.5" y1="13" x2="1132.5" y2="17" stroke="#8a8a8a" stroke-width="1"/><line x1="1138.5" y1="13" x2="1138.5" y2="17" stroke="#8a8a8a" stroke-width="1"/><line x1="1143.5" y1="13" x2="1143.5" y2="17" stroke="#8a8a8a" stroke-width="1"/><line x1="1149.5" y1="13" x2="1149.5" y2="17" stroke="#8a8a8a" stroke-width="1"/><line x1="1155.5" y1="13" x2="1155.5" y2="17" stroke="#8a8a8a" stroke-width="1"/><line x1="1160.5" y1="13" x2="1160.5" y2="17" stroke="#8a8a8a" stroke-width="1"/><line x1="1166.5" y1="13" x2="1166.5" y2="17" stroke="#8a8a8a" stroke-width="1"/><line x1="1172.5" y1="0" x2="1172.5" y2="17" stroke="#8e8e8e" stroke-width="1"/><text x="1176.2" y="10.2" font-size="9.5" fill="#c8c8c8" font-family="Liberation Sans">320</text><line x1="1177.5" y1="13" x2="1177.5" y2="17" stroke="#8a8a8a" stroke-width="1"/><line x1="1183.5" y1="13" x2="1183.5" y2="17" stroke="#8a8a8a" stroke-width="1"/><line x1="1189.5" y1="13" x2="1189.5" y2="17" stroke="#8a8a8a" stroke-width="1"/><line x1="1194.5" y1="13" x2="1194.5" y2="17" stroke="#8a8a8a" stroke-width="1"/><line x1="1200.5" y1="13" x2="1200.5" y2="17" stroke="#8a8a8a" stroke-width="1"/><line x1="1206.5" y1="13" x2="1206.5" y2="17" stroke="#8a8a8a" stroke-width="1"/><line x1="1211.5" y1="13" x2="1211.5" y2="17" stroke="#8a8a8a" stroke-width="1"/><line x1="1217.5" y1="13" x2="1217.5" y2="17" stroke="#8a8a8a" stroke-width="1"/><line x1="1223.5" y1="13" x2="1223.5" y2="17" stroke="#8a8a8a" stroke-width="1"/><line x1="1228.5" y1="0" x2="1228.5" y2="17" stroke="#8e8e8e" stroke-width="1"/><text x="1232.2" y="10.2" font-size="9.5" fill="#c8c8c8" font-family="Liberation Sans">340</text><line x1="1234.5" y1="13" x2="1234.5" y2="17" stroke="#8a8a8a" stroke-width="1"/><line x1="1240.5" y1="13" x2="1240.5" y2="17" stroke="#8a8a8a" stroke-width="1"/><line x1="1245.5" y1="13" x2="1245.5" y2="17" stroke="#8a8a8a" stroke-width="1"/><line x1="1251.5" y1="13" x2="1251.5" y2="17" stroke="#8a8a8a" stroke-width="1"/><line x1="1257.5" y1="13" x2="1257.5" y2="17" stroke="#8a8a8a" stroke-width="1"/><line x1="1262.5" y1="13" x2="1262.5" y2="17" stroke="#8a8a8a" stroke-width="1"/><line x1="1268.5" y1="13" x2="1268.5" y2="17" stroke="#8a8a8a" stroke-width="1"/><line x1="1274.5" y1="13" x2="1274.5" y2="17" stroke="#8a8a8a" stroke-width="1"/><line x1="1279.5" y1="13" x2="1279.5" y2="17" stroke="#8a8a8a" stroke-width="1"/><line x1="1285.5" y1="0" x2="1285.5" y2="17" stroke="#8e8e8e" stroke-width="1"/><text x="1289.2" y="10.2" font-size="9.5" fill="#c8c8c8" font-family="Liberation Sans">360</text><line x1="1291.5" y1="13" x2="1291.5" y2="17" stroke="#8a8a8a" stroke-width="1"/><line x1="1296.5" y1="13" x2="1296.5" y2="17" stroke="#8a8a8a" stroke-width="1"/><line x1="1302.5" y1="13" x2="1302.5" y2="17" stroke="#8a8a8a" stroke-width="1"/><line x1="1308.5" y1="13" x2="1308.5" y2="17" stroke="#8a8a8a" stroke-width="1"/><line x1="1313.5" y1="13" x2="1313.5" y2="17" stroke="#8a8a8a" stroke-width="1"/><line x1="1319.5" y1="13" x2="1319.5" y2="17" stroke="#8a8a8a" stroke-width="1"/><line x1="1325.5" y1="13" x2="1325.5" y2="17" stroke="#8a8a8a" stroke-width="1"/><line x1="1330.5" y1="13" x2="1330.5" y2="17" stroke="#8a8a8a" stroke-width="1"/><line x1="1336.5" y1="13" x2="1336.5" y2="17" stroke="#8a8a8a" stroke-width="1"/><line x1="1342.5" y1="0" x2="1342.5" y2="17" stroke="#8e8e8e" stroke-width="1"/><text x="1346.2" y="10.2" font-size="9.5" fill="#c8c8c8" font-family="Liberation Sans">380</text><line x1="1347.5" y1="13" x2="1347.5" y2="17" stroke="#8a8a8a" stroke-width="1"/><line x1="1353.5" y1="13" x2="1353.5" y2="17" stroke="#8a8a8a" stroke-width="1"/><line x1="1359.5" y1="13" x2="1359.5" y2="17" stroke="#8a8a8a" stroke-width="1"/><line x1="1364.5" y1="13" x2="1364.5" y2="17" stroke="#8a8a8a" stroke-width="1"/><line x1="1370.5" y1="13" x2="1370.5" y2="17" stroke="#8a8a8a" stroke-width="1"/><line x1="1376.5" y1="13" x2="1376.5" y2="17" stroke="#8a8a8a" stroke-width="1"/><line x1="1381.5" y1="13" x2="1381.5" y2="17" stroke="#8a8a8a" stroke-width="1"/><line x1="1387.5" y1="13" x2="1387.5" y2="17" stroke="#8a8a8a" stroke-width="1"/><line x1="1393.5" y1="13" x2="1393.5" y2="17" stroke="#8a8a8a" stroke-width="1"/><line x1="1399.5" y1="0" x2="1399.5" y2="17" stroke="#8e8e8e" stroke-width="1"/><text x="1403.2" y="10.2" font-size="9.5" fill="#c8c8c8" font-family="Liberation Sans">400</text><line x1="1404.5" y1="13" x2="1404.5" y2="17" stroke="#8a8a8a" stroke-width="1"/><line x1="1410.5" y1="13" x2="1410.5" y2="17" stroke="#8a8a8a" stroke-width="1"/><line x1="1416.5" y1="13" x2="1416.5" y2="17" stroke="#8a8a8a" stroke-width="1"/><line x1="1421.5" y1="13" x2="1421.5" y2="17" stroke="#8a8a8a" stroke-width="1"/><line x1="1427.5" y1="13" x2="1427.5" y2="17" stroke="#8a8a8a" stroke-width="1"/><line x1="1433.5" y1="13" x2="1433.5" y2="17" stroke="#8a8a8a" stroke-width="1"/><line x1="1438.5" y1="13" x2="1438.5" y2="17" stroke="#8a8a8a" stroke-width="1"/><line x1="1444.5" y1="13" x2="1444.5" y2="17" stroke="#8a8a8a" stroke-width="1"/></svg>
<svg class="ic" style="left:40px;top:100px" width="17" height="892"><line x1="9" y1="0.5" x2="17" y2="0.5" stroke="#5c5c5c" stroke-width="1"/><line x1="9" y1="6.5" x2="17" y2="6.5" stroke="#5c5c5c" stroke-width="1"/><line x1="1" y1="12.5" x2="17" y2="12.5" stroke="#8e8e8e" stroke-width="1"/><text x="4" y="23.0" font-size="9.5" fill="#c8c8c8" font-family="Liberation Sans">4</text><text x="4" y="32.7" font-size="9.5" fill="#c8c8c8" font-family="Liberation Sans">0</text><line x1="9" y1="17.5" x2="17" y2="17.5" stroke="#5c5c5c" stroke-width="1"/><line x1="9" y1="23.5" x2="17" y2="23.5" stroke="#5c5c5c" stroke-width="1"/><line x1="9" y1="29.5" x2="17" y2="29.5" stroke="#5c5c5c" stroke-width="1"/><line x1="9" y1="34.5" x2="17" y2="34.5" stroke="#5c5c5c" stroke-width="1"/><line x1="9" y1="40.5" x2="17" y2="40.5" stroke="#5c5c5c" stroke-width="1"/><line x1="9" y1="46.5" x2="17" y2="46.5" stroke="#5c5c5c" stroke-width="1"/><line x1="9" y1="51.5" x2="17" y2="51.5" stroke="#5c5c5c" stroke-width="1"/><line x1="9" y1="57.5" x2="17" y2="57.5" stroke="#5c5c5c" stroke-width="1"/><line x1="9" y1="63.5" x2="17" y2="63.5" stroke="#5c5c5c" stroke-width="1"/><line x1="1" y1="68.5" x2="17" y2="68.5" stroke="#8e8e8e" stroke-width="1"/><text x="4" y="79.0" font-size="9.5" fill="#c8c8c8" font-family="Liberation Sans">2</text><text x="4" y="88.7" font-size="9.5" fill="#c8c8c8" font-family="Liberation Sans">0</text><line x1="9" y1="74.5" x2="17" y2="74.5" stroke="#5c5c5c" stroke-width="1"/><line x1="9" y1="80.5" x2="17" y2="80.5" stroke="#5c5c5c" stroke-width="1"/><line x1="9" y1="85.5" x2="17" y2="85.5" stroke="#5c5c5c" stroke-width="1"/><line x1="9" y1="91.5" x2="17" y2="91.5" stroke="#5c5c5c" stroke-width="1"/><line x1="9" y1="97.5" x2="17" y2="97.5" stroke="#5c5c5c" stroke-width="1"/><line x1="9" y1="102.5" x2="17" y2="102.5" stroke="#5c5c5c" stroke-width="1"/><line x1="9" y1="108.5" x2="17" y2="108.5" stroke="#5c5c5c" stroke-width="1"/><line x1="9" y1="114.5" x2="17" y2="114.5" stroke="#5c5c5c" stroke-width="1"/><line x1="9" y1="119.5" x2="17" y2="119.5" stroke="#5c5c5c" stroke-width="1"/><line x1="1" y1="125.5" x2="17" y2="125.5" stroke="#8e8e8e" stroke-width="1"/><text x="4" y="136.0" font-size="9.5" fill="#c8c8c8" font-family="Liberation Sans">0</text><line x1="9" y1="131.5" x2="17" y2="131.5" stroke="#5c5c5c" stroke-width="1"/><line x1="9" y1="136.5" x2="17" y2="136.5" stroke="#5c5c5c" stroke-width="1"/><line x1="9" y1="142.5" x2="17" y2="142.5" stroke="#5c5c5c" stroke-width="1"/><line x1="9" y1="148.5" x2="17" y2="148.5" stroke="#5c5c5c" stroke-width="1"/><line x1="9" y1="153.5" x2="17" y2="153.5" stroke="#5c5c5c" stroke-width="1"/><line x1="9" y1="159.5" x2="17" y2="159.5" stroke="#5c5c5c" stroke-width="1"/><line x1="9" y1="165.5" x2="17" y2="165.5" stroke="#5c5c5c" stroke-width="1"/><line x1="9" y1="170.5" x2="17" y2="170.5" stroke="#5c5c5c" stroke-width="1"/><line x1="9" y1="176.5" x2="17" y2="176.5" stroke="#5c5c5c" stroke-width="1"/><line x1="1" y1="182.5" x2="17" y2="182.5" stroke="#8e8e8e" stroke-width="1"/><text x="4" y="193.0" font-size="9.5" fill="#c8c8c8" font-family="Liberation Sans">2</text><text x="4" y="202.7" font-size="9.5" fill="#c8c8c8" font-family="Liberation Sans">0</text><line x1="9" y1="187.5" x2="17" y2="187.5" stroke="#5c5c5c" stroke-width="1"/><line x1="9" y1="193.5" x2="17" y2="193.5" stroke="#5c5c5c" stroke-width="1"/><line x1="9" y1="199.5" x2="17" y2="199.5" stroke="#5c5c5c" stroke-width="1"/><line x1="9" y1="204.5" x2="17" y2="204.5" stroke="#5c5c5c" stroke-width="1"/><line x1="9" y1="210.5" x2="17" y2="210.5" stroke="#5c5c5c" stroke-width="1"/><line x1="9" y1="216.5" x2="17" y2="216.5" stroke="#5c5c5c" stroke-width="1"/><line x1="9" y1="221.5" x2="17" y2="221.5" stroke="#5c5c5c" stroke-width="1"/><line x1="9" y1="227.5" x2="17" y2="227.5" stroke="#5c5c5c" stroke-width="1"/><line x1="9" y1="233.5" x2="17" y2="233.5" stroke="#5c5c5c" stroke-width="1"/><line x1="1" y1="238.5" x2="17" y2="238.5" stroke="#8e8e8e" stroke-width="1"/><text x="4" y="249.0" font-size="9.5" fill="#c8c8c8" font-family="Liberation Sans">4</text><text x="4" y="258.7" font-size="9.5" fill="#c8c8c8" font-family="Liberation Sans">0</text><line x1="9" y1="244.5" x2="17" y2="244.5" stroke="#5c5c5c" stroke-width="1"/><line x1="9" y1="250.5" x2="17" y2="250.5" stroke="#5c5c5c" stroke-width="1"/><line x1="9" y1="255.5" x2="17" y2="255.5" stroke="#5c5c5c" stroke-width="1"/><line x1="9" y1="261.5" x2="17" y2="261.5" stroke="#5c5c5c" stroke-width="1"/><line x1="9" y1="267.5" x2="17" y2="267.5" stroke="#5c5c5c" stroke-width="1"/><line x1="9" y1="272.5" x2="17" y2="272.5" stroke="#5c5c5c" stroke-width="1"/><line x1="9" y1="278.5" x2="17" y2="278.5" stroke="#5c5c5c" stroke-width="1"/><line x1="9" y1="284.5" x2="17" y2="284.5" stroke="#5c5c5c" stroke-width="1"/><line x1="9" y1="289.5" x2="17" y2="289.5" stroke="#5c5c5c" stroke-width="1"/><line x1="1" y1="295.5" x2="17" y2="295.5" stroke="#8e8e8e" stroke-width="1"/><text x="4" y="306.0" font-size="9.5" fill="#c8c8c8" font-family="Liberation Sans">6</text><text x="4" y="315.7" font-size="9.5" fill="#c8c8c8" font-family="Liberation Sans">0</text><line x1="9" y1="301.5" x2="17" y2="301.5" stroke="#5c5c5c" stroke-width="1"/><line x1="9" y1="306.5" x2="17" y2="306.5" stroke="#5c5c5c" stroke-width="1"/><line x1="9" y1="312.5" x2="17" y2="312.5" stroke="#5c5c5c" stroke-width="1"/><line x1="9" y1="318.5" x2="17" y2="318.5" stroke="#5c5c5c" stroke-width="1"/><line x1="9" y1="323.5" x2="17" y2="323.5" stroke="#5c5c5c" stroke-width="1"/><line x1="9" y1="329.5" x2="17" y2="329.5" stroke="#5c5c5c" stroke-width="1"/><line x1="9" y1="335.5" x2="17" y2="335.5" stroke="#5c5c5c" stroke-width="1"/><line x1="9" y1="340.5" x2="17" y2="340.5" stroke="#5c5c5c" stroke-width="1"/><line x1="9" y1="346.5" x2="17" y2="346.5" stroke="#5c5c5c" stroke-width="1"/><line x1="1" y1="352.5" x2="17" y2="352.5" stroke="#8e8e8e" stroke-width="1"/><text x="4" y="363.0" font-size="9.5" fill="#c8c8c8" font-family="Liberation Sans">8</text><text x="4" y="372.7" font-size="9.5" fill="#c8c8c8" font-family="Liberation Sans">0</text><line x1="9" y1="357.5" x2="17" y2="357.5" stroke="#5c5c5c" stroke-width="1"/><line x1="9" y1="363.5" x2="17" y2="363.5" stroke="#5c5c5c" stroke-width="1"/><line x1="9" y1="369.5" x2="17" y2="369.5" stroke="#5c5c5c" stroke-width="1"/><line x1="9" y1="374.5" x2="17" y2="374.5" stroke="#5c5c5c" stroke-width="1"/><line x1="9" y1="380.5" x2="17" y2="380.5" stroke="#5c5c5c" stroke-width="1"/><line x1="9" y1="386.5" x2="17" y2="386.5" stroke="#5c5c5c" stroke-width="1"/><line x1="9" y1="391.5" x2="17" y2="391.5" stroke="#5c5c5c" stroke-width="1"/><line x1="9" y1="397.5" x2="17" y2="397.5" stroke="#5c5c5c" stroke-width="1"/><line x1="9" y1="403.5" x2="17" y2="403.5" stroke="#5c5c5c" stroke-width="1"/><line x1="1" y1="408.5" x2="17" y2="408.5" stroke="#8e8e8e" stroke-width="1"/><text x="4" y="419.0" font-size="9.5" fill="#c8c8c8" font-family="Liberation Sans">1</text><text x="4" y="428.7" font-size="9.5" fill="#c8c8c8" font-family="Liberation Sans">0</text><text x="4" y="438.4" font-size="9.5" fill="#c8c8c8" font-family="Liberation Sans">0</text><line x1="9" y1="414.5" x2="17" y2="414.5" stroke="#5c5c5c" stroke-width="1"/><line x1="9" y1="420.5" x2="17" y2="420.5" stroke="#5c5c5c" stroke-width="1"/><line x1="9" y1="426.5" x2="17" y2="426.5" stroke="#5c5c5c" stroke-width="1"/><line x1="9" y1="431.5" x2="17" y2="431.5" stroke="#5c5c5c" stroke-width="1"/><line x1="9" y1="437.5" x2="17" y2="437.5" stroke="#5c5c5c" stroke-width="1"/><line x1="9" y1="443.5" x2="17" y2="443.5" stroke="#5c5c5c" stroke-width="1"/><line x1="9" y1="448.5" x2="17" y2="448.5" stroke="#5c5c5c" stroke-width="1"/><line x1="9" y1="454.5" x2="17" y2="454.5" stroke="#5c5c5c" stroke-width="1"/><line x1="9" y1="460.5" x2="17" y2="460.5" stroke="#5c5c5c" stroke-width="1"/><line x1="1" y1="465.5" x2="17" y2="465.5" stroke="#8e8e8e" stroke-width="1"/><text x="4" y="476.0" font-size="9.5" fill="#c8c8c8" font-family="Liberation Sans">1</text><text x="4" y="485.7" font-size="9.5" fill="#c8c8c8" font-family="Liberation Sans">2</text><text x="4" y="495.4" font-size="9.5" fill="#c8c8c8" font-family="Liberation Sans">0</text><line x1="9" y1="471.5" x2="17" y2="471.5" stroke="#5c5c5c" stroke-width="1"/><line x1="9" y1="477.5" x2="17" y2="477.5" stroke="#5c5c5c" stroke-width="1"/><line x1="9" y1="482.5" x2="17" y2="482.5" stroke="#5c5c5c" stroke-width="1"/><line x1="9" y1="488.5" x2="17" y2="488.5" stroke="#5c5c5c" stroke-width="1"/><line x1="9" y1="494.5" x2="17" y2="494.5" stroke="#5c5c5c" stroke-width="1"/><line x1="9" y1="499.5" x2="17" y2="499.5" stroke="#5c5c5c" stroke-width="1"/><line x1="9" y1="505.5" x2="17" y2="505.5" stroke="#5c5c5c" stroke-width="1"/><line x1="9" y1="511.5" x2="17" y2="511.5" stroke="#5c5c5c" stroke-width="1"/><line x1="9" y1="516.5" x2="17" y2="516.5" stroke="#5c5c5c" stroke-width="1"/><line x1="1" y1="522.5" x2="17" y2="522.5" stroke="#8e8e8e" stroke-width="1"/><text x="4" y="533.0" font-size="9.5" fill="#c8c8c8" font-family="Liberation Sans">1</text><text x="4" y="542.7" font-size="9.5" fill="#c8c8c8" font-family="Liberation Sans">4</text><text x="4" y="552.4" font-size="9.5" fill="#c8c8c8" font-family="Liberation Sans">0</text><line x1="9" y1="528.5" x2="17" y2="528.5" stroke="#5c5c5c" stroke-width="1"/><line x1="9" y1="533.5" x2="17" y2="533.5" stroke="#5c5c5c" stroke-width="1"/><line x1="9" y1="539.5" x2="17" y2="539.5" stroke="#5c5c5c" stroke-width="1"/><line x1="9" y1="545.5" x2="17" y2="545.5" stroke="#5c5c5c" stroke-width="1"/><line x1="9" y1="550.5" x2="17" y2="550.5" stroke="#5c5c5c" stroke-width="1"/><line x1="9" y1="556.5" x2="17" y2="556.5" stroke="#5c5c5c" stroke-width="1"/><line x1="9" y1="562.5" x2="17" y2="562.5" stroke="#5c5c5c" stroke-width="1"/><line x1="9" y1="567.5" x2="17" y2="567.5" stroke="#5c5c5c" stroke-width="1"/><line x1="9" y1="573.5" x2="17" y2="573.5" stroke="#5c5c5c" stroke-width="1"/><line x1="1" y1="579.5" x2="17" y2="579.5" stroke="#8e8e8e" stroke-width="1"/><text x="4" y="590.0" font-size="9.5" fill="#c8c8c8" font-family="Liberation Sans">1</text><text x="4" y="599.7" font-size="9.5" fill="#c8c8c8" font-family="Liberation Sans">6</text><text x="4" y="609.4" font-size="9.5" fill="#c8c8c8" font-family="Liberation Sans">0</text><line x1="9" y1="584.5" x2="17" y2="584.5" stroke="#5c5c5c" stroke-width="1"/><line x1="9" y1="590.5" x2="17" y2="590.5" stroke="#5c5c5c" stroke-width="1"/><line x1="9" y1="596.5" x2="17" y2="596.5" stroke="#5c5c5c" stroke-width="1"/><line x1="9" y1="601.5" x2="17" y2="601.5" stroke="#5c5c5c" stroke-width="1"/><line x1="9" y1="607.5" x2="17" y2="607.5" stroke="#5c5c5c" stroke-width="1"/><line x1="9" y1="613.5" x2="17" y2="613.5" stroke="#5c5c5c" stroke-width="1"/><line x1="9" y1="618.5" x2="17" y2="618.5" stroke="#5c5c5c" stroke-width="1"/><line x1="9" y1="624.5" x2="17" y2="624.5" stroke="#5c5c5c" stroke-width="1"/><line x1="9" y1="630.5" x2="17" y2="630.5" stroke="#5c5c5c" stroke-width="1"/><line x1="1" y1="635.5" x2="17" y2="635.5" stroke="#8e8e8e" stroke-width="1"/><text x="4" y="646.0" font-size="9.5" fill="#c8c8c8" font-family="Liberation Sans">1</text><text x="4" y="655.7" font-size="9.5" fill="#c8c8c8" font-family="Liberation Sans">8</text><text x="4" y="665.4" font-size="9.5" fill="#c8c8c8" font-family="Liberation Sans">0</text><line x1="9" y1="641.5" x2="17" y2="641.5" stroke="#5c5c5c" stroke-width="1"/><line x1="9" y1="647.5" x2="17" y2="647.5" stroke="#5c5c5c" stroke-width="1"/><line x1="9" y1="652.5" x2="17" y2="652.5" stroke="#5c5c5c" stroke-width="1"/><line x1="9" y1="658.5" x2="17" y2="658.5" stroke="#5c5c5c" stroke-width="1"/><line x1="9" y1="664.5" x2="17" y2="664.5" stroke="#5c5c5c" stroke-width="1"/><line x1="9" y1="669.5" x2="17" y2="669.5" stroke="#5c5c5c" stroke-width="1"/><line x1="9" y1="675.5" x2="17" y2="675.5" stroke="#5c5c5c" stroke-width="1"/><line x1="9" y1="681.5" x2="17" y2="681.5" stroke="#5c5c5c" stroke-width="1"/><line x1="9" y1="686.5" x2="17" y2="686.5" stroke="#5c5c5c" stroke-width="1"/><line x1="1" y1="692.5" x2="17" y2="692.5" stroke="#8e8e8e" stroke-width="1"/><text x="4" y="703.0" font-size="9.5" fill="#c8c8c8" font-family="Liberation Sans">2</text><text x="4" y="712.7" font-size="9.5" fill="#c8c8c8" font-family="Liberation Sans">0</text><text x="4" y="722.4" font-size="9.5" fill="#c8c8c8" font-family="Liberation Sans">0</text><line x1="9" y1="698.5" x2="17" y2="698.5" stroke="#5c5c5c" stroke-width="1"/><line x1="9" y1="703.5" x2="17" y2="703.5" stroke="#5c5c5c" stroke-width="1"/><line x1="9" y1="709.5" x2="17" y2="709.5" stroke="#5c5c5c" stroke-width="1"/><line x1="9" y1="715.5" x2="17" y2="715.5" stroke="#5c5c5c" stroke-width="1"/><line x1="9" y1="720.5" x2="17" y2="720.5" stroke="#5c5c5c" stroke-width="1"/><line x1="9" y1="726.5" x2="17" y2="726.5" stroke="#5c5c5c" stroke-width="1"/><line x1="9" y1="732.5" x2="17" y2="732.5" stroke="#5c5c5c" stroke-width="1"/><line x1="9" y1="737.5" x2="17" y2="737.5" stroke="#5c5c5c" stroke-width="1"/><line x1="9" y1="743.5" x2="17" y2="743.5" stroke="#5c5c5c" stroke-width="1"/><line x1="1" y1="749.5" x2="17" y2="749.5" stroke="#8e8e8e" stroke-width="1"/><text x="4" y="760.0" font-size="9.5" fill="#c8c8c8" font-family="Liberation Sans">2</text><text x="4" y="769.7" font-size="9.5" fill="#c8c8c8" font-family="Liberation Sans">2</text><text x="4" y="779.4" font-size="9.5" fill="#c8c8c8" font-family="Liberation Sans">0</text><line x1="9" y1="754.5" x2="17" y2="754.5" stroke="#5c5c5c" stroke-width="1"/><line x1="9" y1="760.5" x2="17" y2="760.5" stroke="#5c5c5c" stroke-width="1"/><line x1="9" y1="766.5" x2="17" y2="766.5" stroke="#5c5c5c" stroke-width="1"/><line x1="9" y1="771.5" x2="17" y2="771.5" stroke="#5c5c5c" stroke-width="1"/><line x1="9" y1="777.5" x2="17" y2="777.5" stroke="#5c5c5c" stroke-width="1"/><line x1="9" y1="783.5" x2="17" y2="783.5" stroke="#5c5c5c" stroke-width="1"/><line x1="9" y1="788.5" x2="17" y2="788.5" stroke="#5c5c5c" stroke-width="1"/><line x1="9" y1="794.5" x2="17" y2="794.5" stroke="#5c5c5c" stroke-width="1"/><line x1="9" y1="800.5" x2="17" y2="800.5" stroke="#5c5c5c" stroke-width="1"/><line x1="1" y1="805.5" x2="17" y2="805.5" stroke="#8e8e8e" stroke-width="1"/><text x="4" y="816.0" font-size="9.5" fill="#c8c8c8" font-family="Liberation Sans">2</text><text x="4" y="825.7" font-size="9.5" fill="#c8c8c8" font-family="Liberation Sans">4</text><text x="4" y="835.4" font-size="9.5" fill="#c8c8c8" font-family="Liberation Sans">0</text><line x1="9" y1="811.5" x2="17" y2="811.5" stroke="#5c5c5c" stroke-width="1"/><line x1="9" y1="817.5" x2="17" y2="817.5" stroke="#5c5c5c" stroke-width="1"/><line x1="9" y1="822.5" x2="17" y2="822.5" stroke="#5c5c5c" stroke-width="1"/><line x1="9" y1="828.5" x2="17" y2="828.5" stroke="#5c5c5c" stroke-width="1"/><line x1="9" y1="834.5" x2="17" y2="834.5" stroke="#5c5c5c" stroke-width="1"/><line x1="9" y1="839.5" x2="17" y2="839.5" stroke="#5c5c5c" stroke-width="1"/><line x1="9" y1="845.5" x2="17" y2="845.5" stroke="#5c5c5c" stroke-width="1"/><line x1="9" y1="851.5" x2="17" y2="851.5" stroke="#5c5c5c" stroke-width="1"/><line x1="9" y1="856.5" x2="17" y2="856.5" stroke="#5c5c5c" stroke-width="1"/><line x1="1" y1="862.5" x2="17" y2="862.5" stroke="#8e8e8e" stroke-width="1"/><text x="4" y="873.0" font-size="9.5" fill="#c8c8c8" font-family="Liberation Sans">2</text><text x="4" y="882.7" font-size="9.5" fill="#c8c8c8" font-family="Liberation Sans">6</text><text x="4" y="892.4" font-size="9.5" fill="#c8c8c8" font-family="Liberation Sans">0</text><line x1="9" y1="868.5" x2="17" y2="868.5" stroke="#5c5c5c" stroke-width="1"/><line x1="9" y1="873.5" x2="17" y2="873.5" stroke="#5c5c5c" stroke-width="1"/><line x1="9" y1="879.5" x2="17" y2="879.5" stroke="#5c5c5c" stroke-width="1"/><line x1="9" y1="885.5" x2="17" y2="885.5" stroke="#5c5c5c" stroke-width="1"/><line x1="9" y1="890.5" x2="17" y2="890.5" stroke="#5c5c5c" stroke-width="1"/></svg>
<div class="a" style="left:1504px;top:83px;width:15px;height:925px;background:linear-gradient(90deg,#353535,#3c3c3c)"></div>
<div class="a" style="left:1519px;top:62px;width:3px;height:966px;background:#262626"></div>
<div class="a" style="left:322px;top:224px;width:917px;height:644px;background:#161616"></div>
<div class="a" style="left:323px;top:225px;width:914px;height:641px;background:#fff"></div>
<div class="a" style="left:40px;top:992px;width:1479px;height:17px;background:#3a3a3a"></div>
<div class="a" style="left:88px;top:992px;width:24px;height:16px;background:#4a4a4a"></div>
<div class="a" style="left:112px;top:992px;width:172px;height:16px;background:#454545"></div>
<div class="a" style="left:284px;top:992px;width:12px;height:16px;background:#505050"></div>
<div class="t" style="left:51px;top:995px;color:#f0f0f0;font-size:11px">100%</div>
<div class="a" style="left:95px;top:994px;width:11px;height:11px;border-radius:50%;background:#9a9a9a"></div>
<div class="a" style="left:98px;top:997px;width:5px;height:5px;background:#e0e0e0"></div>
<div class="t" style="left:148px;top:995px;color:#f0f0f0;font-size:12px">文档:1.68M/0 字节</div>
<div class="a" style="left:287px;top:996px;border-top:4.5px solid transparent;border-bottom:4.5px solid transparent;border-left:6px solid #f0f0f0"></div>
<div class="a" style="left:40px;top:1008px;width:1479px;height:2px;background:#2a2a2a"></div>
<div class="a" style="left:40px;top:1010px;width:1479px;height:18px;background:#383838"></div>
<div class="a" style="left:41px;top:1010px;width:72px;height:18px;background:#4a4a4a"></div>
<div class="a" style="left:113px;top:1010px;width:51px;height:18px;background:#3d3d3d;border-right:1px solid #333"></div>
<div class="t" style="left:48px;top:1015px;color:#d8d8d8;font-size:11px;letter-spacing:.3px">Mini Bridge</div>
<div class="t" style="left:120px;top:1013px;color:#9a9a9a;font-size:12px">时间轴</div>
<div class="a" style="left:0;top:1028px;width:1920px;height:1px;background:#646464"></div>
<!-- TOOLBAR -->
<div class="a" style="left:0;top:75px;width:38px;height:953px;background:#535353;border-left:1px solid #464646;border-top:1px solid #5e5e5e"></div>
<div class="a" style="left:5px;top:76px;width:1px;height:952px;background:#575757"></div>
<div class="a" style="left:9px;top:79px;width:20px;height:3px;background:repeating-linear-gradient(90deg,#2e2e2e 0 1px,transparent 1px 2px)"></div>
<div class="a" style="left:4px;top:380px;width:31px;height:23px;background:#393939;border:1px solid #2e2e2e"></div>
<svg class="ic" style="left:0;top:75px" width="38" height="650" viewBox="0 75 38 650">
<defs><linearGradient id="rg" x1="0" y1="0" x2="0" y2="1"><stop offset="0" stop-color="#8a8a8a"/><stop offset="1" stop-color="#5a5a5a"/></linearGradient></defs>
<g fill="#c9c9c9" stroke="none">
<rect x="5" y="247" width="28" height="1" fill="#404040"/>
<rect x="5" y="377" width="28" height="1" fill="#404040"/>
<rect x="5" y="458" width="28" height="1" fill="#404040"/>
<rect x="5" y="565" width="28" height="1" fill="#404040"/>
<rect x="5" y="617" width="28" height="1" fill="#404040"/>
<!-- move -->
<path d="M11 95v11l2.8-2.8 2 4 1.8-.9-2-4H20z"/>
<path d="M23 99.5v9M18.5 104h9" stroke="#c9c9c9" stroke-width="1.3"/><path d="M23 98l-1.6 2h3.2zM23 110l-1.6-2h3.2zM17 104l2-1.6v3.2zM29 104l-2-1.6v3.2z"/>
<!-- marquee -->
<ellipse cx="19" cy="128.5" rx="7.5" ry="6.5" fill="none" stroke="#d0d0d0" stroke-width="1.4" stroke-dasharray="3 1.6"/>
<!-- lasso -->
<ellipse cx="20" cy="152" rx="8" ry="5" transform="rotate(-15 20 152)" fill="none" stroke="#d0d0d0" stroke-width="1.5"/>
<path d="M13.5 156c-1.5 1.5-1 3 .5 3.5-1 1-1 3 .5 4" fill="none" stroke="#c0c0c0" stroke-width="1.2"/>
<!-- quick select -->
<circle cx="15" cy="180" r="5" fill="none" stroke="#d0d0d0" stroke-width="1.3" stroke-dasharray="1.2 1.2"/>
<path d="M18 183.5l8-8.5c1-1 2.5.5 1.5 1.5l-8 8c-.8 1-4 1.5-4 1.5s.5-2 2.5-2.5z"/>
<!-- crop -->
<path d="M14 198v14h14M11 202h14v14" fill="none" stroke="#d0d0d0" stroke-width="2"/><path d="M16 210l10-10" stroke="#c0c0c0" stroke-width="1"/>
<!-- eyedropper -->
<path d="M12.5 240.5l1-3.5 8-8 2.5 2.5-8 8z" fill="none" stroke="#d0d0d0" stroke-width="1.3"/>
<path d="M20 229l3.5-3.5c1-1 3.5 1.5 2.5 2.5L22.5 231.5z"/>
<!-- heal -->
<path d="M12.5 267.5l10.5-10.5c1.5-1.5 4.5 1.5 3 3L15.5 270.5c-1.5 1.5-4.5-1.5-3-3z"/><g fill="#6a6a6a"><circle cx="18" cy="262" r=".8"/><circle cx="20" cy="264" r=".8"/><circle cx="22" cy="262" r=".8"/><circle cx="20" cy="260" r=".8"/></g>
<!-- brush -->
<path d="M18.5 290.5l8-9c.6-.6 1.4.2.8.8l-7.3 9.2z"/><path d="M10.5 296c2.5.3 4-1 5-3 .8-1.5 3.2-.8 3 .8-.3 2-3.5 3.2-8 2.2z"/>
<!-- stamp -->
<circle cx="19" cy="306.5" r="2.6"/><rect x="17.5" y="308" width="3" height="5"/><path d="M11 313h16v3H11z"/><rect x="11" y="318" width="16" height="1.6"/>
<!-- history brush -->
<path d="M19.5 342.5l7-8c.6-.6 1.4.2.8.8l-6.3 8.2z"/><path d="M12 347c2.5.3 4-1 5-3 .8-1.5 3.2-.8 3 .8-.3 2-3.5 3.2-8 2.2z"/><path d="M12 339c1.5-3 4.5-4 7-3" fill="none" stroke="#c9c9c9" stroke-width="1.2"/><path d="M11 336l1.5 3.5 3-1.5z"/>
<!-- eraser -->
<path d="M12 368l7-5h9l-7 5z"/><rect x="12" y="368" width="9" height="5" fill="#9a9a9a"/><path d="M21 368l7-5v5l-7 5z" fill="#7a7a7a"/>
<path d="M12 355l4 4M16 355l-4 4" stroke="#c9c9c9" stroke-width="1"/><circle cx="11.5" cy="359.5" r="1" fill="none" stroke="#c9c9c9"/><circle cx="16.5" cy="359.5" r="1" fill="none" stroke="#c9c9c9"/>
<!-- bucket (selected) -->
<path d="M12 389.5l5.5-5.5 6 6-5.5 5.5c-.7.7-1.5.7-2.2 0l-3.8-3.8c-.7-.7-.7-1.5 0-2.2z"/><path d="M15.5 387c-.5-3.5 3-5 4-2.5l-.5 3" fill="none" stroke="#c9c9c9" stroke-width="1.2"/><path d="M23.5 390c1.2 1.8 2.2 3.2 2.2 4.2a1.1 1.1 0 0 1-2.2 0z"/>
<!-- blur/smudge -->
<path d="M14 413c1-3 5-4 8-3.5 3 .5 4.5 3 3 5.5L20 421c-1 1-2.5 1-3.5 0z"/><path d="M12 425l6-6M15 426l5-5" stroke="#c9c9c9" stroke-width="1.5"/>
<!-- dodge -->
<circle cx="18" cy="441" r="5"/><path d="M21 444.5l5 5.5" stroke="#c9c9c9" stroke-width="2.2"/>
<!-- pen -->
<path d="M11.5 480l2.5-8 7-5 3.5 3.5-5 7z"/><path d="M22 466l2-2 4 4-2 2z"/><circle cx="17.5" cy="474" r="1" fill="#3a3a3a"/><path d="M12 479.5l5-5" stroke="#535353" stroke-width=".8"/>
<!-- type -->
<path d="M12.5 491h14v3.5h-1l-.8-2h-4.2v11.5h2v1.2h-6v-1.2h2v-11.5h-4.2l-.8 2h-1z"/>
<!-- path select -->
<path d="M14.5 516v14.5l3.5-3.3 3 5.5 2.2-1.1-2.8-5.3h4.8z" fill="#1e1e1e" stroke="#d8d8d8" stroke-width="1"/>
<!-- rectangle -->
<rect x="11.5" y="545.5" width="15" height="13" fill="url(#rg)" stroke="#d0d0d0" stroke-width="1"/>
<!-- hand -->
<path d="M13 584l-3.5-5c-.6-1 .5-2 1.5-1.3l2 1.8v-8.5c0-1.2 2-1.2 2 0v6.5v-8.2c0-1.2 2-1.2 2 0v8.2v-7.5c0-1.2 2-1.2 2 0v7.5v-6c0-1.2 2-1.2 2 0v8.5c0 4-2 6.5-5.5 6.5-1.5 0-3-.8-4.5-2.5z"/>
<!-- zoom -->
<circle cx="17" cy="603" r="5" fill="#8a8a8a" stroke="#d0d0d0" stroke-width="1.4"/><path d="M20.5 606.5l5.5 5.5" stroke="#d0d0d0" stroke-width="2.4"/>
<!-- small triangles -->
<path d="M28 138h4v-4z M28 164h4v-4z M28 190h4v-4z M28 216h4v-4z M28 242h4v-4z M28 271h4v-4z M28 297h4v-4z M28 323h4v-4z M28 349h4v-4z M28 374h4v-4z M28 400h4v-4z M28 427h4v-4z M28 453h4v-4z M28 481h4v-4z M28 507h4v-4z M28 534h4v-4z M28 561h4v-4z M28 588h4v-4z M28 614h4v-4z M28 719h4v-4z" fill="#e8e8e8"/>
<!-- default colors / swap -->
<rect x="4.5" y="622.5" width="6" height="6" fill="#111" stroke="#e0e0e0" stroke-width="1"/>
<rect x="8" y="626" width="6" height="6" fill="#9a9a9a" stroke="#535353" stroke-width=".5"/>
<path d="M23 621.5l-2 1.8 2 1.7M21.5 623.3c4 0 6.5 1.5 7 5.2M26.5 627l2 2.5 2-2.5" fill="none" stroke="#e0e0e0" stroke-width="1.1"/>
<!-- quick mask -->
<rect x="10.5" y="675.5" width="17" height="13" fill="#2e2e2e" stroke="#d8d8d8" stroke-width="1"/>
<circle cx="19" cy="682" r="4" fill="none" stroke="#d8d8d8" stroke-width="1.1" stroke-dasharray="1 1"/>
<!-- screen mode -->
<rect x="10.5" y="705.5" width="11" height="9" fill="#6a6a6a" stroke="#d8d8d8" stroke-width="1"/>
<rect x="15.5" y="702.5" width="12" height="9" fill="#707070" stroke="#d8d8d8" stroke-width="1"/>
</g>
</svg>
<!-- fg/bg colors -->
<div class="a" style="left:14px;top:647px;width:20px;height:20px;background:#fff;border:1px solid #2e2e2e"></div>
<div class="a" style="left:4px;top:637px;width:20px;height:20px;background:#f3a0a8;border:1px solid #fff;outline:1px solid #2e2e2e"></div>
<div class="a" style="left:1522px;top:63px;width:398px;height:12px;background:#383838"></div>
<div class="t" style="left:1574px;top:64px;font-size:8px;color:#d0d0d0;letter-spacing:-2px">◀◀</div>
<div class="t" style="left:1906px;top:64px;font-size:8px;color:#d0d0d0">▶|</div>
<div class="a" style="left:1522px;top:75px;width:64px;height:953px;background:#535353"></div>
<div class="a" style="left:1522px;top:143px;width:64px;height:1px;background:#383838;box-shadow:0 1px 0 #5e5e5e"></div>
<div class="a" style="left:1522px;top:212px;width:64px;height:1px;background:#383838;box-shadow:0 1px 0 #5e5e5e"></div>
<div class="a" style="left:1522px;top:281px;width:64px;height:1px;background:#383838;box-shadow:0 1px 0 #5e5e5e"></div>
<div class="a" style="left:1522px;top:350px;width:64px;height:1px;background:#383838;box-shadow:0 1px 0 #5e5e5e"></div>
<div class="a" style="left:1522px;top:391px;width:64px;height:1px;background:#383838;box-shadow:0 1px 0 #5e5e5e"></div>
<div class="a" style="left:1545px;top:80px;width:21px;height:3px;background:repeating-linear-gradient(90deg,#2a2a2a 0 1px,transparent 1px 2px)"></div>
<div class="a" style="left:1545px;top:148px;width:21px;height:3px;background:repeating-linear-gradient(90deg,#2a2a2a 0 1px,transparent 1px 2px)"></div>
<div class="a" style="left:1545px;top:217px;width:21px;height:3px;background:repeating-linear-gradient(90deg,#2a2a2a 0 1px,transparent 1px 2px)"></div>
<div class="a" style="left:1545px;top:286px;width:21px;height:3px;background:repeating-linear-gradient(90deg,#2a2a2a 0 1px,transparent 1px 2px)"></div>
<div class="a" style="left:1545px;top:355px;width:21px;height:3px;background:repeating-linear-gradient(90deg,#2a2a2a 0 1px,transparent 1px 2px)"></div>
<div class="a" style="left:1560px;top:101px;width:6px;height:2px;background:repeating-linear-gradient(90deg,#e0e0e0 0 1px,transparent 1px 2px)"></div>
<div class="a" style="left:1560px;top:130px;width:6px;height:2px;background:repeating-linear-gradient(90deg,#e0e0e0 0 1px,transparent 1px 2px)"></div>
<div class="a" style="left:1560px;top:170px;width:6px;height:2px;background:repeating-linear-gradient(90deg,#e0e0e0 0 1px,transparent 1px 2px)"></div>
<div class="a" style="left:1560px;top:199px;width:6px;height:2px;background:repeating-linear-gradient(90deg,#e0e0e0 0 1px,transparent 1px 2px)"></div>
<div class="a" style="left:1560px;top:239px;width:6px;height:2px;background:repeating-linear-gradient(90deg,#e0e0e0 0 1px,transparent 1px 2px)"></div>
<div class="a" style="left:1560px;top:268px;width:6px;height:2px;background:repeating-linear-gradient(90deg,#e0e0e0 0 1px,transparent 1px 2px)"></div>
<div class="a" style="left:1560px;top:309px;width:6px;height:2px;background:repeating-linear-gradient(90deg,#e0e0e0 0 1px,transparent 1px 2px)"></div>
<div class="a" style="left:1560px;top:337px;width:6px;height:2px;background:repeating-linear-gradient(90deg,#e0e0e0 0 1px,transparent 1px 2px)"></div>
<div class="a" style="left:1560px;top:376px;width:6px;height:2px;background:repeating-linear-gradient(90deg,#e0e0e0 0 1px,transparent 1px 2px)"></div>
<svg class="ic" style="left:1522px;top:75px" width="64" height="320" viewBox="1522 75 64 320"><g fill="#c8c8c8">
<rect x="1535.5" y="89.5" width="4" height="4" fill="none" stroke="#c8c8c8"/><rect x="1535.5" y="95.5" width="4" height="4" fill="none" stroke="#c8c8c8"/><rect x="1535" y="101" width="5" height="5"/>
<path d="M1543 93l3-3 1 1c2 2 2 6 0 9" fill="none" stroke="#c8c8c8" stroke-width="1.6"/>
<path d="M1534 120l16 7-16 7z"/>
<path d="M1536 168h10v9h-10z"/><path d="M1538 168l-3-7 1.5-.8 3 7.8zM1540.5 168v-9h2v9zM1543 168l3.5-7 1.5.8-3 6.2z"/><ellipse cx="1535" cy="160" rx="2" ry="3"/><ellipse cx="1541.5" cy="158.5" rx="2" ry="3"/><ellipse cx="1548" cy="160" rx="2" ry="3"/>
<ellipse cx="1539" cy="190.5" rx="4.5" ry="2.5"/><rect x="1542" y="189.5" width="9" height="2"/><rect x="1532" y="198.5" width="13" height="2"/><path d="M1544 199.5l6-5.5v11z"/>
<text x="1533" y="243" font-size="15" font-family="Liberation Sans" fill="#c8c8c8">A</text><rect x="1546" y="229" width="1" height="14"/>
<path d="M1540 259h8v14h-2v-12h-2v12h-2v-8c-3 0-4-1-4-3s2-3 2-3z"/>
<rect x="1535" y="299" width="13" height="14" rx="1"/><rect x="1537" y="301" width="6" height="1.5" fill="#535353"/><rect x="1537" y="304" width="6" height="1.5" fill="#535353"/><rect x="1537" y="308" width="9" height="2" fill="#535353"/>
<path d="M1535 327h13v10l-4 4h-9z"/><rect x="1537" y="330" width="8" height="1.3" fill="#535353"/><rect x="1537" y="333" width="8" height="1.3" fill="#535353"/>
<path d="M1534 368l4-2 4 2v5l-4 2-4-2z" fill="none" stroke="#c8c8c8"/><rect x="1543" y="366" width="4" height="3"/><rect x="1543" y="371" width="4" height="3"/><rect x="1534" y="378" width="14" height="3"/>
</g></svg>
<div class="a" style="left:1586px;top:75px;width:3px;height:953px;background:#2a2a2a"></div>
<div class="a" style="left:1912px;top:63px;width:8px;height:965px;background:#3e3e3e;border-left:1px solid #474747"></div>
<div class="a" style="left:1913px;top:35px;width:7px;height:86px;background:linear-gradient(90deg,#2a3350,#2e3858)"></div>
<div class="a" style="left:1589px;top:75px;width:330px;height:17px;background:#3a3a3a"></div>
<div class="a" style="left:1589px;top:75px;width:38px;height:17px;background:#444"></div>
<div class="a" style="left:1627px;top:75px;width:39px;height:17px;background:#535353;border-left:1px solid #353535;border-right:1px solid #353535"></div>
<div class="t" style="left:1596px;top:78px;color:#a8a8a8">颜色</div>
<div class="t" style="left:1635px;top:78px;color:#f0f0f0">色板</div>
<div class="a" style="left:1899px;top:79px;width:14px;height:9px"><div class="dn" style="left:0;top:3px;border-left-width:3px;border-right-width:3px;border-top-width:4px"></div><div class="a" style="left:6px;top:0;width:8px;height:9px;background:repeating-linear-gradient(#dcdcdc 0 1.5px,transparent 1.5px 3px)"></div></div>
<div class="a" style="left:1589px;top:92px;width:323px;height:352px;background:#494949"></div>
<div class="a" style="left:1901px;top:92px;width:11px;height:352px;background:#474747;border-left:1px solid #3e3e3e"></div>
<div class="a" style="left:1589px;top:94px;width:312px;height:60px"><i class="sw" style="left:0px;top:0px;background:#ff0000"></i><i class="sw" style="left:12px;top:0px;background:#ffff00"></i><i class="sw" style="left:24px;top:0px;background:#00ff00"></i><i class="sw" style="left:36px;top:0px;background:#00ffff"></i><i class="sw" style="left:48px;top:0px;background:#0000ff"></i><i class="sw" style="left:60px;top:0px;background:#ff00ff"></i><i class="sw" style="left:72px;top:0px;background:#ffffff"></i><i class="sw" style="left:84px;top:0px;background:#ececec"></i><i class="sw" style="left:96px;top:0px;background:#e1e1e1"></i><i class="sw" style="left:108px;top:0px;background:#d8d8d8"></i><i class="sw" style="left:120px;top:0px;background:#d0d0d0"></i><i class="sw" style="left:132px;top:0px;background:#c9c9c9"></i><i class="sw" style="left:144px;top:0px;background:#c1c1c1"></i><i class="sw" style="left:156px;top:0px;background:#b7b7b7"></i><i class="sw" style="left:168px;top:0px;background:#aeaeae"></i><i class="sw" style="left:180px;top:0px;background:#a6a6a6"></i><i class="sw" style="left:192px;top:0px;background:#ed1c24"></i><i class="sw" style="left:204px;top:0px;background:#fff200"></i><i class="sw" style="left:216px;top:0px;background:#00a651"></i><i class="sw" style="left:228px;top:0px;background:#00aeef"></i><i class="sw" style="left:240px;top:0px;background:#2e3192"></i><i class="sw" style="left:252px;top:0px;background:#ec008c"></i><i class="sw" style="left:264px;top:0px;background:#9d9d9d"></i><i class="sw" style="left:276px;top:0px;background:#939393"></i><i class="sw" style="left:288px;top:0px;background:#898989"></i><i class="sw" style="left:300px;top:0px;background:#7d7d7d"></i><i class="sw" style="left:0px;top:12px;background:#6e6e6e"></i><i class="sw" style="left:12px;top:12px;background:#5e5e5e"></i><i class="sw" style="left:24px;top:12px;background:#4e4e4e"></i><i class="sw" style="left:36px;top:12px;background:#3e3e3e"></i><i class="sw" style="left:48px;top:12px;background:#2a2a2a"></i><i class="sw" style="left:60px;top:12px;background:#000000"></i><i class="sw" style="left:72px;top:12px;background:#f7977a"></i><i class="sw" style="left:84px;top:12px;background:#f9ad81"></i><i class="sw" style="left:96px;top:12px;background:#fdc68a"></i><i class="sw" style="left:108px;top:12px;background:#fff79a"></i><i class="sw" style="left:120px;top:12px;background:#c4df9b"></i><i class="sw" style="left:132px;top:12px;background:#a3d39c"></i><i class="sw" style="left:144px;top:12px;background:#82ca9d"></i><i class="sw" style="left:156px;top:12px;background:#7bcdc8"></i><i class="sw" style="left:168px;top:12px;background:#6ecff6"></i><i class="sw" style="left:180px;top:12px;background:#7ea7d8"></i><i class="sw" style="left:192px;top:12px;background:#8493ca"></i><i class="sw" style="left:204px;top:12px;background:#8882be"></i><i class="sw" style="left:216px;top:12px;background:#a187be"></i><i class="sw" style="left:228px;top:12px;background:#bc8dbf"></i><i class="sw" style="left:240px;top:12px;background:#f49ac2"></i><i class="sw" style="left:252px;top:12px;background:#f6989d"></i><i class="sw" style="left:264px;top:12px;background:#f26c4f"></i><i class="sw" style="left:276px;top:12px;background:#f68e55"></i><i class="sw" style="left:288px;top:12px;background:#fbaf5d"></i><i class="sw" style="left:300px;top:12px;background:#fff568"></i><i class="sw" style="left:0px;top:24px;background:#acd372"></i><i class="sw" style="left:12px;top:24px;background:#7cc576"></i><i class="sw" style="left:24px;top:24px;background:#3bb878"></i><i class="sw" style="left:36px;top:24px;background:#1abbb4"></i><i class="sw" style="left:48px;top:24px;background:#00bff3"></i><i class="sw" style="left:60px;top:24px;background:#438ccb"></i><i class="sw" style="left:72px;top:24px;background:#5574b9"></i><i class="sw" style="left:84px;top:24px;background:#605ca8"></i><i class="sw" style="left:96px;top:24px;background:#855fa8"></i><i class="sw" style="left:108px;top:24px;background:#a763a8"></i><i class="sw" style="left:120px;top:24px;background:#f06eaa"></i><i class="sw" style="left:132px;top:24px;background:#f26d7d"></i><i class="sw" style="left:144px;top:24px;background:#ed1c24"></i><i class="sw" style="left:156px;top:24px;background:#f26522"></i><i class="sw" style="left:168px;top:24px;background:#f7941d"></i><i class="sw" style="left:180px;top:24px;background:#fff200"></i><i class="sw" style="left:192px;top:24px;background:#8dc63f"></i><i class="sw" style="left:204px;top:24px;background:#39b54a"></i><i class="sw" style="left:216px;top:24px;background:#00a651"></i><i class="sw" style="left:228px;top:24px;background:#00a99d"></i><i class="sw" style="left:240px;top:24px;background:#00aeef"></i><i class="sw" style="left:252px;top:24px;background:#0072bc"></i><i class="sw" style="left:264px;top:24px;background:#0054a6"></i><i class="sw" style="left:276px;top:24px;background:#2e3192"></i><i class="sw" style="left:288px;top:24px;background:#662d91"></i><i class="sw" style="left:300px;top:24px;background:#92278f"></i><i class="sw" style="left:0px;top:36px;background:#ec008c"></i><i class="sw" style="left:12px;top:36px;background:#ed145b"></i><i class="sw" style="left:24px;top:36px;background:#c4101a"></i><i class="sw" style="left:36px;top:36px;background:#c2500f"></i><i class="sw" style="left:48px;top:36px;background:#c87c0c"></i><i class="sw" style="left:60px;top:36px;background:#c8b800"></i><i class="sw" style="left:72px;top:36px;background:#6a9c22"></i><i class="sw" style="left:84px;top:36px;background:#1e8e34"></i><i class="sw" style="left:96px;top:36px;background:#008a3e"></i><i class="sw" style="left:108px;top:36px;background:#008c6a"></i><i class="sw" style="left:120px;top:36px;background:#008abc"></i><i class="sw" style="left:132px;top:36px;background:#005c9c"></i><i class="sw" style="left:144px;top:36px;background:#004890"></i><i class="sw" style="left:156px;top:36px;background:#241a7a"></i><i class="sw" style="left:168px;top:36px;background:#561276"></i><i class="sw" style="left:180px;top:36px;background:#780878"></i><i class="sw" style="left:192px;top:36px;background:#b4006c"></i><i class="sw" style="left:204px;top:36px;background:#b40046"></i><i class="sw" style="left:216px;top:36px;background:#a00000"></i><i class="sw" style="left:228px;top:36px;background:#a03e00"></i><i class="sw" style="left:240px;top:36px;background:#a06000"></i><i class="sw" style="left:252px;top:36px;background:#a09600"></i><i class="sw" style="left:264px;top:36px;background:#528020"></i><i class="sw" style="left:276px;top:36px;background:#007a2a"></i><i class="sw" style="left:288px;top:36px;background:#006e30"></i><i class="sw" style="left:300px;top:36px;background:#006c60"></i><i class="sw" style="left:0px;top:48px;background:#0076a6"></i><i class="sw" style="left:12px;top:48px;background:#004a88"></i><i class="sw" style="left:24px;top:48px;background:#003078"></i><i class="sw" style="left:36px;top:48px;background:#100666"></i><i class="sw" style="left:48px;top:48px;background:#3c0664"></i><i class="sw" style="left:60px;top:48px;background:#5c0060"></i><i class="sw" style="left:72px;top:48px;background:#900058"></i><i class="sw" style="left:84px;top:48px;background:#900030"></i><i class="sw" style="left:96px;top:48px;background:#c7b299"></i><i class="sw" style="left:108px;top:48px;background:#998675"></i><i class="sw" style="left:120px;top:48px;background:#736357"></i><i class="sw" style="left:132px;top:48px;background:#534741"></i><i class="sw" style="left:144px;top:48px;background:#362f2d"></i><i class="sw" style="left:156px;top:48px;background:#c69c6d"></i><i class="sw" style="left:168px;top:48px;background:#a67c52"></i><i class="sw" style="left:180px;top:48px;background:#8c6239"></i><i class="sw" style="left:192px;top:48px;background:#754c24"></i><i class="sw" style="left:204px;top:48px;background:#603913"></i></div>
<div class="a" style="left:1589px;top:94px;width:312px;height:48px;background:repeating-linear-gradient(90deg,transparent 0 11px,#2c2c2c 11px 12px),repeating-linear-gradient(transparent 0 11px,#2c2c2c 11px 12px)"></div>
<div class="a" style="left:1589px;top:142px;width:216px;height:12px;background:repeating-linear-gradient(90deg,transparent 0 11px,#2c2c2c 11px 12px),repeating-linear-gradient(transparent 0 11px,#2c2c2c 11px 12px)"></div>
<div class="a" style="left:1589px;top:444px;width:330px;height:18px;background:#535353;border-top:1px solid #5f5f5f"></div>
<svg class="ic" style="left:1851px;top:448px" width="12" height="12" viewBox="0 0 12 12"><path d="M1 0h10v11H5V6H1z" fill="#d4d4d4"/><path d="M0.5 5.5h5v5.5" fill="none" stroke="#2a2a2a"/><path d="M1 6h4v4z" fill="#c0c0c0"/></svg>
<svg class="ic" style="left:1879px;top:447px" width="12" height="12" viewBox="0 0 12 12"><path d="M4 1h4v1.5H4zM1 2.5h10v1.5H1zM2 4.5h8v7H2z" fill="#8a8a8a"/><path d="M4 5.5v5M6 5.5v5M8 5.5v5" stroke="#535353" stroke-width=".8"/></svg>
<div class="a" style="left:1589px;top:462px;width:330px;height:3px;background:#2c2c2c"></div>
<div class="a" style="left:1589px;top:465px;width:330px;height:17px;background:#3a3a3a"></div>
<div class="a" style="left:1589px;top:465px;width:39px;height:17px;background:#535353;border-right:1px solid #353535"></div>
<div class="a" style="left:1628px;top:465px;width:40px;height:17px;background:#444;border-right:1px solid #353535"></div>
<div class="t" style="left:1597px;top:468px;color:#f0f0f0">调整</div>
<div class="t" style="left:1636px;top:468px;color:#a8a8a8">样式</div>
<div class="a" style="left:1899px;top:469px;width:14px;height:9px"><div class="dn" style="left:0;top:3px;border-left-width:3px;border-right-width:3px;border-top-width:4px"></div><div class="a" style="left:6px;top:0;width:8px;height:9px;background:repeating-linear-gradient(#dcdcdc 0 1.5px,transparent 1.5px 3px)"></div></div>
<div class="a" style="left:1589px;top:482px;width:330px;height:112px;background:#535353"></div>
<div class="t" style="left:1598px;top:489px;color:#f0f0f0">添加调整</div>
<div class="a" style="left:1589px;top:594px;width:330px;height:3px;background:#2c2c2c"></div>
<div class="a" style="left:1589px;top:597px;width:330px;height:17px;background:#3a3a3a"></div>
<div class="a" style="left:1589px;top:597px;width:39px;height:17px;background:#535353;border-right:1px solid #353535"></div>
<div class="a" style="left:1628px;top:597px;width:39px;height:17px;background:#444;border-right:1px solid #353535"></div>
<div class="a" style="left:1667px;top:597px;width:40px;height:17px;background:#444;border-right:1px solid #353535"></div>
<div class="t" style="left:1597px;top:600px;color:#f0f0f0">图层</div>
<div class="t" style="left:1635px;top:600px;color:#a8a8a8">通道</div>
<div class="t" style="left:1675px;top:600px;color:#a8a8a8">路径</div>
<div class="a" style="left:1899px;top:601px;width:14px;height:9px"><div class="dn" style="left:0;top:3px;border-left-width:3px;border-right-width:3px;border-top-width:4px"></div><div class="a" style="left:6px;top:0;width:8px;height:9px;background:repeating-linear-gradient(#dcdcdc 0 1.5px,transparent 1.5px 3px)"></div></div>
<div class="a" style="left:1589px;top:614px;width:330px;height:84px;background:#535353"></div>
<div class="a" style="left:1589px;top:642px;width:330px;height:1px;background:#3e3e3e;box-shadow:0 1px 0 #5e5e5e"></div>
<div class="a" style="left:1589px;top:669px;width:330px;height:1px;background:#3e3e3e;box-shadow:0 1px 0 #5e5e5e"></div>
<div class="a" style="left:1589px;top:697px;width:330px;height:1px;background:#3e3e3e"></div>
<div class="sel" style="left:1594px;top:618px;width:70px;height:20px;opacity:.9"></div>
<div class="t" style="left:1600px;top:622px;color:#9a9a9a;font-size:11px">⌕</div>
<div class="t" style="left:1615px;top:622px;color:#a8a8a8">类型</div>
<div class="ud" style="left:1653px;top:622px;opacity:.6"></div>
<div class="sel" style="left:1594px;top:646px;width:109px;height:20px;opacity:.75"></div>
<div class="t" style="left:1601px;top:650px;color:#c8c8c8">正常</div>
<div class="ud" style="left:1693px;top:650px;opacity:.6"></div>
<div class="t" style="left:1712px;top:650px;color:#b8b8b8">不透明度:</div>
<div class="inp" style="left:1769px;top:646px;width:37px;height:19px;background:#4a4a4a;border-color:#464646"></div>
<div class="t" style="left:1773px;top:650px;color:#5e5e5e;font-size:10px">100%</div>
<div class="sel" style="left:1805px;top:646px;width:19px;height:19px;opacity:.5"></div>
<div class="dn" style="left:1811px;top:654px;border-top-color:#777"></div>
<div class="t" style="left:1596px;top:677px;color:#b8b8b8">锁定:</div>
<div class="t" style="left:1736px;top:677px;color:#b8b8b8">填充:</div>
<div class="inp" style="left:1769px;top:675px;width:37px;height:19px;background:#4a4a4a;border-color:#464646"></div>
<div class="t" style="left:1773px;top:679px;color:#5e5e5e;font-size:10px">100%</div>
<div class="sel" style="left:1805px;top:675px;width:19px;height:19px;opacity:.5"></div>
<div class="dn" style="left:1811px;top:683px;border-top-color:#777"></div>
<div class="a" style="left:1589px;top:698px;width:323px;height:312px;background:#494949"></div>
<div class="a" style="left:1589px;top:699px;width:30px;height:65px;background:#535353;border-right:1px solid #444"></div>
<div class="a" style="left:1619px;top:699px;width:285px;height:65px;background:linear-gradient(90deg,#606a7c,#5b687a 30%,#5a677a)"></div>
<div class="a" style="left:1589px;top:764px;width:315px;height:1px;background:#3c3c3c"></div>
<div class="a" style="left:1904px;top:698px;width:8px;height:312px;background:#444"></div>
<div class="a" style="left:1623px;top:703px;width:79px;height:57px;background:#fff;border:1px solid #1e1e1e"></div>
<div class="t" style="left:1715px;top:725px;color:#fff;font-style:italic;font-size:12px">背景</div>
<svg class="ic" style="left:1596px;top:725px" width="16" height="12" viewBox="0 0 16 12"><path d="M1 6c2-3 4-4.5 7-4.5S13 3 15 6c-2 3-4 4.5-7 4.5S3 9 1 6z" fill="#d8d8d8"/><circle cx="8" cy="6" r="3" fill="#2a2a2a"/><circle cx="8" cy="6" r="1.2" fill="#888"/></svg>
<svg class="ic" style="left:1876px;top:725px" width="12" height="14" viewBox="0 0 12 14"><path d="M3 6V4a3 3 0 0 1 6 0v2" fill="none" stroke="#d0d0d0" stroke-width="1.3"/><rect x="1.5" y="6.5" width="9" height="7" fill="none" stroke="#d0d0d0"/><rect x="5" y="9" width="2" height="2" fill="#d0d0d0"/></svg>
<div class="a" style="left:1589px;top:1010px;width:330px;height:18px;background:#535353;border-top:1px solid #6a6a6a"></div>
<svg class="ic" style="left:1589px;top:505px" width="323" height="85" viewBox="1589 505 323 85">
<defs>
<linearGradient id="gg" x1="0" y1="0" x2="1" y2="1"><stop offset="0" stop-color="#e8e8e8"/><stop offset="1" stop-color="#8a8a8a"/></linearGradient>
<linearGradient id="gh" x1="0" y1="0" x2="1" y2="0"><stop offset="0" stop-color="#1e1e1e"/><stop offset="1" stop-color="#e0e0e0"/></linearGradient>
</defs>
<g fill="#c8c8c8">
<!-- row1 -->
<circle cx="1645" cy="520" r="4.5" fill="none" stroke="#d0d0d0" stroke-width="1.5"/><path d="M1645 515.5a4.5 4.5 0 0 1 0 9z"/>
<path d="M1645 512v2M1645 526v2M1637 520h2M1651 520h2M1639.5 514.5l1.4 1.4M1649 524l1.4 1.4M1639.5 525.5l1.4-1.4M1649 516l1.4-1.4" stroke="#d0d0d0" stroke-width="1.5"/>
<path d="M1661 528v-7h1v-2h1v3h1v-4h1v2h1v-5h1v3h1v-2h1v4h1v-6h1v5h1v-3h1v4h1v-2h1v3h1v5z"/><rect x="1661" y="526" width="18" height="2" fill="#dadada"/>
<rect x="1686.5" y="512.5" width="15" height="15" fill="#5a5a5a" stroke="#c8c8c8"/><path d="M1691.5 513v14M1696.5 513v14M1687 517.5h14M1687 522.5h14" stroke="#8a8a8a" stroke-width=".8"/><path d="M1687 527c5 0 4-14 14-14" fill="none" stroke="#e8e8e8" stroke-width="1.3"/>
<rect x="1710.5" y="512.5" width="15" height="15" fill="url(#gg)" stroke="#c8c8c8"/><path d="M1711 527l14-14v14z" fill="#3a3a3a"/><path d="M1712 516h5M1714.5 513.5v5M1718 524h5" stroke="#fff" stroke-width="1.2"/>
<path d="M1734 512h16l-8 16z" fill="url(#gg)"/>
<!-- row2 -->
<rect x="1626.5" y="539.5" width="15" height="14" fill="url(#gh)" stroke="#d0d0d0"/><rect x="1627" y="540" width="14" height="5" fill="#b8b8b8"/><path d="M1630 540v4M1634 540v4M1638 540v4" stroke="#555" stroke-width="1"/>
<path d="M1658 540v12M1652 552h12M1651 542h14" stroke="#c8c8c8" stroke-width="1.3"/><path d="M1651 543l-2.5 5h5zM1665 543l-2.5 5h5z" fill="none" stroke="#c8c8c8"/><path d="M1648.5 548h5a2.5 2 0 0 1-5 0zM1662.5 548h5a2.5 2 0 0 1-5 0z"/>
<rect x="1674.5" y="539.5" width="15" height="14" fill="#e0e0e0" stroke="#d0d0d0"/><rect x="1675" y="540" width="7" height="13" fill="#2a2a2a"/>
<rect x="1698" y="540" width="11" height="9" rx="1"/><circle cx="1708" cy="549" r="4.5" fill="#8a8a8a" stroke="#d0d0d0"/><circle cx="1703" cy="544" r="2" fill="#555"/>
<circle cx="1729" cy="543" r="4"/><circle cx="1726" cy="549" r="4" fill="#d8d8d8"/><circle cx="1732" cy="549" r="4" fill="#b0b0b0"/>
<rect x="1746.5" y="539.5" width="15" height="13" fill="#6a6a6a" stroke="#d0d0d0"/><path d="M1751.5 540v12M1756.5 540v12M1747 544.5h14M1747 548.5h14" stroke="#d0d0d0" stroke-width=".9"/>
<!-- row3 -->
<rect x="1637.5" y="567.5" width="15" height="14" fill="#9a9a9a" stroke="#d0d0d0"/><path d="M1640 578c2-6 7-8 10-8-2 4-6 8-10 8z" fill="#2e2e2e"/>
<rect x="1662.5" y="567.5" width="15" height="14" fill="url(#gg)" stroke="#d0d0d0"/><path d="M1663 581l14-13" stroke="#6a6a6a" stroke-width="2"/>
<rect x="1686.5" y="567.5" width="15" height="14" fill="#e0e0e0" stroke="#d0d0d0"/><path d="M1687 578l3-2 2 1 3-3 2 1 4-3v4l-4 3-2-1-3 3-2-1-3 2z" fill="#2a2a2a"/>
<rect x="1710.5" y="567.5" width="15" height="14" fill="#9a9a9a" stroke="#d0d0d0"/><path d="M1711 568l7 6.5 7-6.5M1711 581l7-6.5 7 6.5" fill="none" stroke="#5a5a5a" stroke-width="1.5"/>
<rect x="1734.5" y="567.5" width="15" height="14" fill="url(#gh)" stroke="#d0d0d0"/>
</g>
</svg>
<!-- layers filter icons -->
<svg class="ic" style="left:1625px;top:617px" width="205" height="75" viewBox="1625 617 205 75">
<g fill="#8c8c8c">
<rect x="1685.5" y="622.5" width="12" height="9" fill="none" stroke="#8c8c8c"/><path d="M1687 630l3-3 2 2 2-2 2 3z"/>
<circle cx="1715" cy="627" r="5"/><path d="M1712 630l6-6" stroke="#535353" stroke-width="1.2"/>
<text x="1733" y="633" font-family="Liberation Serif" font-size="15" fill="#8c8c8c">T</text>
<rect x="1758.5" y="622.5" width="10" height="9" fill="none" stroke="#8c8c8c"/><rect x="1757" y="621" width="3" height="3"/><rect x="1767" y="621" width="3" height="3"/><rect x="1757" y="630" width="3" height="3"/><rect x="1767" y="630" width="3" height="3"/>
<path d="M1782 628h8v5h-8z"/><path d="M1784 628v-4a2 2 0 0 1 4 0v4" fill="none" stroke="#8c8c8c" stroke-width="1.2"/>
<rect x="1816" y="620" width="8" height="5" fill="#6a6a6a"/><rect x="1816" y="625" width="8" height="10" fill="#3e3e3e"/>
<!-- lock icons -->
<rect x="1633" y="679" width="11" height="11" fill="#6e6e6e"/><path d="M1633 679h3v3h-3zM1639 679h3v3h-3zM1636 682h3v3h-3zM1642 682h2v3h-2zM1633 685h3v3h-3zM1639 685h3v3h-3z" fill="#9a9a9a"/>
<path d="M1654 690c2 0 4-1 5-3l7-9-1-1-8 8c-2 1-3 3-3 5z" fill="#8c8c8c"/>
<path d="M1682 677v13M1675.5 683.5h13" stroke="#8c8c8c" stroke-width="1.2"/><path d="M1682 675.5l-2.5 2.5h5zM1682 691.5l-2.5-2.5h5zM1674.5 683.5l2.5-2.5v5zM1689.5 683.5l-2.5-2.5v5z"/>
<rect x="1700" y="683" width="10" height="7"/><path d="M1702 683v-2a3 3 0 0 1 6 0v2" fill="none" stroke="#8c8c8c" stroke-width="1.3"/>
</g>
</svg>
<!-- layers footer icons -->
<svg class="ic" style="left:1710px;top:1012px" width="190" height="16" viewBox="1710 1012 190 16">
<g fill="#b4b4b4">
<rect x="1716" y="1017" width="8" height="6" rx="3" fill="none" stroke="#a8a8a8" stroke-width="1.6"/><rect x="1723" y="1017" width="8" height="6" rx="3" fill="none" stroke="#a8a8a8" stroke-width="1.6"/><path d="M1720 1020h7" stroke="#a8a8a8" stroke-width="1.5"/>
<text x="1745" y="1026" font-family="Liberation Serif" font-style="italic" font-size="13" fill="#8a8a8a">fx</text>
<rect x="1771" y="1015" width="13" height="11"/><circle cx="1777.5" cy="1020.5" r="2.5" fill="#555"/>
<circle cx="1803.5" cy="1020.5" r="5" fill="none" stroke="#c0c0c0" stroke-width="1.6"/><path d="M1800 1024l7-7-1.5-1.5A5 5 0 0 0 1800 1024z"/><path d="M1811 1025l-1.5 1.5h3z" fill="#e0e0e0"/>
<path d="M1825 1016h5l1 2h6v8h-12z"/>
<path d="M1853 1015h10v11h-7v-4h-3z"/><path d="M1852.5 1022.5h3v3z" fill="#b4b4b4"/>
<path d="M1884 1014h4v1.5h-4zM1881 1015.5h10v1.5h-10zM1882 1017.5h8v9h-8z" fill="#8a8a8a"/><path d="M1884 1018.5v7M1886 1018.5v7M1888 1018.5v7" stroke="#535353" stroke-width=".8"/>
</g>
</svg>
<!-- TASKBAR -->
<div class="a" style="left:0;top:1029px;width:1920px;height:51px;background:linear-gradient(90deg,#1c1a19 0,#1e1b1a 450px,#211d1b 700px,#1f1c1b 1000px,#262321 1060px,#2b2826 1180px,#2a2725 1296px,#1f1c1b 1298px,#1e1b1a 1920px)"></div>
<svg class="ic" style="left:17px;top:1042px" width="25" height="25" viewBox="0 0 25 25"><path d="M0 3.5l10-1.4v9.6H0zM11.5 1.9L25 0v11.7H11.5zM0 13.2h10v9.7L0 21.5zM11.5 13.2H25V25l-13.5-1.9z" fill="#fff"/></svg>
<svg class="ic" style="left:78px;top:1043px" width="24" height="24" viewBox="0 0 24 24"><circle cx="14" cy="9" r="6.5" fill="none" stroke="#fff" stroke-width="1.6"/><path d="M9.5 13.5L2 21" stroke="#fff" stroke-width="1.8"/></svg>
<svg class="ic" style="left:136px;top:1044px" width="28" height="22" viewBox="0 0 28 22"><rect x="6.5" y="2.5" width="15" height="17" fill="none" stroke="#fff" stroke-width="1.6"/><path d="M3 5v12M25 5v12" stroke="#fff" stroke-width="1.5"/><path d="M3 5h2M3 17h2M23 5h2M23 17h2" stroke="#fff" stroke-width="1.2"/></svg>
<div class="a" style="left:187px;top:1041px;width:1px;height:30px;background:#4a4646"></div>
<div class="a" style="left:220px;top:1040px;width:31px;height:31px;border-radius:7px;background:#1c8cf3"></div>
<div class="a" style="left:224px;top:1044px;width:23px;height:23px;border-radius:50%;border:2.5px solid #fff"></div>
<div class="t" style="left:229px;top:1048px;color:#fff;font-weight:bold;font-size:15px">K</div>
<div class="a" style="left:271px;top:1031px;width:198px;height:49px;background:linear-gradient(100deg,#7a7979,#6a6969 50%,#605f5f);border:1px solid #a0a0a0"></div>
<div class="a" style="left:281px;top:1040px;width:29px;height:29px;background:#0b1a48;border:2px solid #7ab0f8"></div>
<div class="t" style="left:285px;top:1046px;color:#7fb6ff;font-weight:bold;font-size:16px">Ps</div>
<div class="t" style="left:314px;top:1048px;color:#fff;font-size:15px">未标题-1 @ 100%(...</div>
<!-- app icons -->
<div class="a" style="left:488px;top:1041px;width:29px;height:29px;border-radius:50%;background:radial-gradient(circle at 40% 35%,#9ee36a,#4fae24 70%)"></div>
<div class="t" style="left:494px;top:1043px;color:#fff;font-weight:bold;font-size:20px">e</div>
<div class="a" style="left:553px;top:1040px;width:31px;height:31px;border-radius:50%;background:radial-gradient(circle at 40% 35%,#95d255,#4f9a1f 70%)"></div>
<svg class="ic" style="left:557px;top:1044px" width="24" height="24" viewBox="0 0 24 24"><path d="M5 18L17 4l3 3L8 21z" fill="#fff"/><path d="M7 17l10-11" stroke="#4f9a1f" stroke-width="1.5"/></svg>
<div class="a" style="left:620px;top:1040px;width:30px;height:30px;border-radius:5px;background:linear-gradient(#f4f6ff,#dfe4ff)"></div>
<svg class="ic" style="left:622px;top:1042px" width="26" height="26" viewBox="0 0 26 26"><path d="M3 6l9 6 10-9-3 10-8 9 1-7z" fill="#6b6ef5"/><path d="M3 6l9 6-1 3z" fill="#9aa0ff"/></svg>
<div class="a" style="left:687px;top:1041px;width:28px;height:28px;border-radius:50%;background:radial-gradient(circle at 40% 40%,#ffb27a,#e86a1e 70%,#c9521a)"></div>
<svg class="ic" style="left:690px;top:1045px" width="22" height="20" viewBox="0 0 22 20"><path d="M3 14c3-8 10-11 16-10-3 1-4 3-4 5 2 0 3 2 2 4-3-1-6 2-9 3-2 0-4-1-5-2z" fill="#fff5ea"/></svg>
<svg class="ic" style="left:751px;top:1040px" width="32" height="30" viewBox="0 0 32 30"><path d="M4 3c0-2 2-3 4-2l21 11c2 1 2 4 0 5L8 28c-2 1-4 0-4-2z" fill="#2fa3f6"/><path d="M2 6c0-2 2-3 4-2l14 8c2 1 2 4 0 5L6 25c-2 1-4 0-4-2z" fill="#f5a623"/><path d="M6 8c0-1 1-2 2-1l10 6c1 .5 1 2 0 2.5L8 22c-1 1-2 0-2-1z" fill="#2fd46a"/><path d="M10 11l7 4-7 4z" fill="#fff"/></svg>
<div class="a" style="left:802px;top:1031px;width:198px;height:49px;background:#3a3838;border:1px solid #5a5858"></div>
<div class="a" style="left:811px;top:1040px;width:29px;height:29px;border-radius:6px;background:#161a2a"></div>
<svg class="ic" style="left:813px;top:1045px" width="26" height="20" viewBox="0 0 26 20"><rect x="3" y="3" width="14" height="13" rx="3" fill="none" stroke="#e8e8ff" stroke-width="1.6"/><path d="M17 8l5-3v9l-5-3" fill="none" stroke="#e8e8ff" stroke-width="1.6"/><circle cx="13" cy="6.5" r="1" fill="#e8e8ff"/></svg>
<div class="t" style="left:845px;top:1048px;color:#fff;font-size:15px">嗨格式录屏大师</div>
<!-- tray -->
<svg class="ic" style="left:1476px;top:1046px" width="20" height="18" viewBox="0 0 20 18"><rect x="1.5" y="3.5" width="11" height="11" rx="2" fill="none" stroke="#cfd3ff" stroke-width="1.4"/><path d="M13 7l5-3v10l-5-3" fill="none" stroke="#cfd3ff" stroke-width="1.4"/></svg>
<div class="a" style="left:1505px;top:1045px;width:20px;height:20px;border-radius:3px;background:#eef0ff"></div>
<svg class="ic" style="left:1506px;top:1046px" width="18" height="18" viewBox="0 0 26 26"><path d="M3 6l9 6 10-9-3 10-8 9 1-7z" fill="#6b6ef5"/></svg>
<svg class="ic" style="left:1535px;top:1045px" width="21" height="20" viewBox="0 0 21 20"><path d="M3 3c0-2 2-3 3-2l13 8c1 .5 1 2 0 3L6 19c-1 1-3 0-3-2z" fill="#9a9a9a"/><path d="M8 7l6 3-6 4z" fill="#eee"/></svg>
<div class="a" style="left:1567px;top:1046px;width:18px;height:17px;background:#3f5a1a"></div>
<div class="a" style="left:1569px;top:1050px;width:14px;height:9px;border-radius:50%;border:2px solid #7ab82a"></div>
<svg class="ic" style="left:1594px;top:1045px" width="22" height="20" viewBox="0 0 22 20"><path d="M2 7h3l5-4v14l-5-4H2z" fill="none" stroke="#fff" stroke-width="1.3"/><path d="M13 7c1 1.5 1 4.5 0 6M16 5c2 3 2 7 0 10M19 3c3 4 3 10 0 14" fill="none" stroke="#fff" stroke-width="1.2"/></svg>
<div class="a" style="left:1626px;top:1046px;width:18px;height:13px;background:#8a8a8a;border:1px solid #aaa"></div>
<div class="a" style="left:1626px;top:1060px;width:8px;height:4px;background:#aaa"></div>
<div class="a" style="left:1636px;top:1060px;width:8px;height:4px;background:#aaa"></div>
<svg class="ic" style="left:1655px;top:1045px" width="12" height="20" viewBox="0 0 12 20"><path d="M1 10L11 2v16z" fill="#e8583a"/></svg>
<svg class="ic" style="left:1684px;top:1046px" width="24" height="18" viewBox="0 0 24 18"><path d="M3 1.5v3M6 1.5v3" stroke="#fff" stroke-width="1.2"/><path d="M1.5 4.5h6v2.5a3 3 0 0 1-6 0z" fill="#fff"/><path d="M4.5 9.5v3h3" fill="none" stroke="#fff" stroke-width="1.2"/><rect x="7.5" y="7.5" width="13" height="8" fill="none" stroke="#fff" stroke-width="1.3"/><rect x="9.5" y="9.5" width="9" height="4" fill="#fff"/><rect x="21" y="10" width="1.8" height="3" fill="#fff"/></svg>
<svg class="ic" style="left:1715px;top:1044px" width="20" height="20" viewBox="0 0 20 20"><path d="M4 1l.5 2 2 .5-2 .5L4 6l-.5-2-2-.5 2-.5z" fill="#fff"/><path d="M5 12a10 10 0 0 1 13-4M8 15a6 6 0 0 1 9-3M11 18a2.5 2.5 0 0 1 5-1" fill="none" stroke="#aaa" stroke-width="1.3"/><circle cx="16" cy="18" r="1.3" fill="#ddd"/></svg>
<div class="t" style="left:1745px;top:1047px;color:#fff;font-size:16px;font-weight:bold">英</div>
<div class="a" style="left:1781px;top:1045px;width:19px;height:19px;border-radius:4px;background:#ea5a2a;transform:rotate(-12deg)"></div>
<div class="t" style="left:1785px;top:1045px;color:#fff;font-size:17px;font-weight:bold;font-style:italic">S</div>
<div class="t" style="left:1839px;top:1035px;color:#fff;font-size:15px;letter-spacing:.5px">13:50</div>
<div class="t" style="left:1822px;top:1059px;color:#fff;font-size:15px;letter-spacing:.9px">2020/3/16</div>
<!-- IME floating bar -->
<div class="a" style="left:1437px;top:999px;width:199px;height:29px;background:#fbfbfd"></div>
<div class="a" style="left:1412px;top:998px;width:30px;height:28px;border-radius:5px;background:#ef5a2a;transform:rotate(-12deg)"></div>
<div class="t" style="left:1417px;top:998px;color:#fff;font-size:26px;font-weight:bold;font-style:italic">S</div>
<div class="t" style="left:1451px;top:1004px;color:#2574d6;font-size:18px;font-weight:bold">英</div>
<svg class="ic" style="left:1479px;top:1003px" width="20" height="22" viewBox="0 0 20 22"><path d="M11 2C19 5 19 19 8 20.5 5 21 3 20 1.5 18.5 8 18 12.5 11 11 2z" fill="#2574d6"/></svg>
<svg class="ic" style="left:1505px;top:1005px" width="16" height="20" viewBox="0 0 16 20"><circle cx="4" cy="5" r="2" fill="#2574d6"/><path d="M11 9c2 1 1 5-2 6" stroke="#2574d6" stroke-width="2" fill="none"/></svg>
<svg class="ic" style="left:1530px;top:1005px" width="22" height="16" viewBox="0 0 22 16"><rect x="1" y="1" width="20" height="14" rx="2.5" fill="#2574d6"/><g fill="#fff"><rect x="4" y="4" width="2" height="2"/><rect x="7.5" y="4" width="2" height="2"/><rect x="11" y="4" width="2" height="2"/><rect x="14.5" y="4" width="2" height="2"/><rect x="4" y="7.5" width="2" height="2"/><rect x="7.5" y="7.5" width="2" height="2"/><rect x="11" y="7.5" width="2" height="2"/><rect x="14.5" y="7.5" width="2" height="2"/><rect x="6" y="11" width="10" height="1.6"/></g></svg>
<div class="a" style="left:1565px;top:1003px;width:9px;height:9px;border-radius:50%;background:#c8c8c8"></div>
<div class="a" style="left:1562px;top:1012px;width:12px;height:10px;border-radius:4px 4px 0 0;background:#c8c8c8"></div>
<div class="a" style="left:1568px;top:1015px;width:12px;height:8px;background:#fff;border:1px solid #aaa"></div>
<svg class="ic" style="left:1586px;top:1004px" width="20" height="20" viewBox="0 0 20 20"><path d="M6 1l-5 3 2 4 2-1v12h10V7l2 1 2-4-5-3c-1 2-2 3-4 3S7 3 6 1z" fill="#2574d6"/></svg>
<svg class="ic" style="left:1612px;top:1003px" width="20" height="22" viewBox="0 0 20 22"><path d="M13 2a5 5 0 0 0-4 7L2 17c-1 1-1 2 0 3s2 1 3 0l8-7a5 5 0 0 0 6-5l-3 2-3-1v-3z" fill="#2574d6"/></svg>
<!-- cursor -->
<svg class="ic" style="left:1207px;top:757px" width="28" height="26" viewBox="0 0 28 26"><path d="M2 1L7.8 6.3 2 10.2z" fill="#000"/><path d="M8.2 16.2L15 9.6l6 5.4-7 6.8z" fill="#e4e4e4" stroke="#000" stroke-width="1.4" stroke-linejoin="round"/><path d="M12.6 11.5C11.6 5 16.6 3.5 17 8.5L15.2 13" fill="none" stroke="#000" stroke-width="1.4"/><circle cx="15.2" cy="13" r="1.1" fill="#000"/><path d="M17.6 10.2C21 11.5 22.6 13 22.6 16v4.5" fill="none" stroke="#000" stroke-width="2"/></svg>
</body></html>
